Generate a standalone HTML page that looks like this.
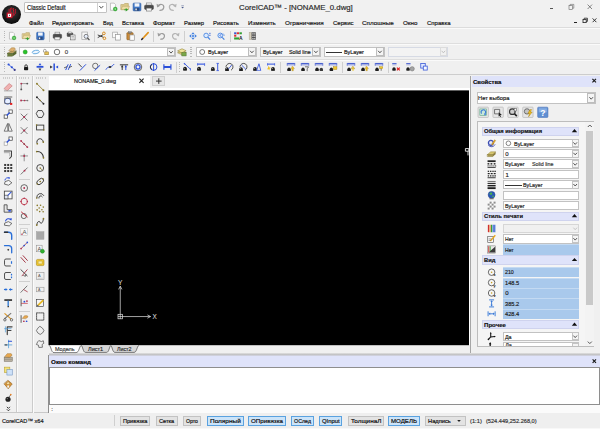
<!DOCTYPE html>
<html><head><meta charset="utf-8"><title>CorelCAD - [NONAME_0.dwg]</title>
<style>
html,body{margin:0;padding:0;}
body{width:600px;height:429px;overflow:hidden;background:#f0f0f0;font-family:"Liberation Sans", sans-serif;position:relative;}
#app{position:absolute;left:0;top:0;width:600px;height:429px;overflow:hidden;background:#f0f0f0;}
#app div{position:absolute;box-sizing:border-box;}
.t{position:absolute;white-space:pre;transform-origin:0 50%;z-index:3;-webkit-text-stroke:0.18px;}
svg{position:absolute;left:0;top:0;}
</style></head><body>
<div id="app">
<div style="left:0px;top:0px;width:600px;height:27px;background:#f1f1f1;"></div>
<div style="left:1.7px;top:4.5px;width:19.2px;height:19.2px;border-radius:50%;background:radial-gradient(circle at 50% 40%,#3c3c3c 0%,#1c1c1c 50%,#0a0a0a 78%,#5a5a5a 92%,#8a8a8a 100%);"></div>
<div style="left:24.2px;top:1.8px;width:82.4px;height:10.8px;background:#ffffff;border:0.6px solid #c2c2c2;border-radius:1px;"></div>
<span id="t0" class="t" style="left:27px;top:5px;font-size:6.3px;line-height:6.3px;color:#151515;transform:scaleX(0.9167);">Classic Default</span>
<div style="left:96.8px;top:3px;width:0.6px;height:8.8px;background:#d0d0d0;"></div>
<span id="t1" class="t" style="left:238.8px;top:4px;font-size:7.9px;line-height:7.9px;color:#2a2a2a;transform:scaleX(0.9905);">CorelCAD™ - [NONAME_0.dwg]</span>
<div style="left:549.8px;top:8.2px;width:3.4px;height:0.8px;background:#555;"></div>
<div style="left:574px;top:22px;width:3.4px;height:1px;background:#222;"></div>
<span id="t2" class="t" style="left:28.7px;top:20px;font-size:6.2px;line-height:6.2px;color:#151515;transform:scaleX(0.9725);">Файл</span>
<span id="t3" class="t" style="left:52px;top:20px;font-size:6.2px;line-height:6.2px;color:#151515;transform:scaleX(0.9778);">Редактировать</span>
<span id="t4" class="t" style="left:102.5px;top:20px;font-size:6.2px;line-height:6.2px;color:#151515;transform:scaleX(0.8926);">Вид</span>
<span id="t5" class="t" style="left:121.8px;top:20px;font-size:6.2px;line-height:6.2px;color:#151515;transform:scaleX(0.9565);">Вставка</span>
<span id="t6" class="t" style="left:152.5px;top:20px;font-size:6.2px;line-height:6.2px;color:#151515;transform:scaleX(1.0007);">Формат</span>
<span id="t7" class="t" style="left:183.8px;top:20px;font-size:6.2px;line-height:6.2px;color:#151515;transform:scaleX(0.9398);">Размер</span>
<span id="t8" class="t" style="left:213px;top:20px;font-size:6.2px;line-height:6.2px;color:#151515;transform:scaleX(0.9634);">Рисовать</span>
<span id="t9" class="t" style="left:248px;top:20px;font-size:6.2px;line-height:6.2px;color:#151515;transform:scaleX(0.9956);">Изменить</span>
<span id="t10" class="t" style="left:285px;top:20px;font-size:6.2px;line-height:6.2px;color:#151515;transform:scaleX(1.0287);">Ограничения</span>
<span id="t11" class="t" style="left:332.5px;top:20px;font-size:6.2px;line-height:6.2px;color:#151515;transform:scaleX(0.9668);">Сервис</span>
<span id="t12" class="t" style="left:362px;top:20px;font-size:6.2px;line-height:6.2px;color:#151515;transform:scaleX(1.0186);">Сплошные</span>
<span id="t13" class="t" style="left:403px;top:20px;font-size:6.2px;line-height:6.2px;color:#151515;transform:scaleX(1.0076);">Окно</span>
<span id="t14" class="t" style="left:427px;top:20px;font-size:6.2px;line-height:6.2px;color:#151515;transform:scaleX(0.9678);">Справка</span>
<div style="left:0px;top:27px;width:600px;height:0.8px;background:#dcdcdc;"></div>
<div style="left:0px;top:27.8px;width:600px;height:0.8px;background:#fafafa;"></div>
<div style="left:0px;top:43.2px;width:600px;height:0.8px;background:#dedede;"></div>
<div style="left:0px;top:44px;width:600px;height:0.7px;background:#fafafa;"></div>
<div style="left:0px;top:59.2px;width:600px;height:0.8px;background:#dedede;"></div>
<div style="left:0px;top:60px;width:600px;height:0.7px;background:#fafafa;"></div>
<div style="left:0px;top:74.2px;width:600px;height:0.8px;background:#cdcdcd;"></div>
<div style="left:3.6px;top:31px;width:1.4px;height:10px;background:repeating-linear-gradient(#b8b8b8 0 0.9px,transparent 0.9px 1.9px);"></div>
<div style="left:48.5px;top:30.5px;width:0.7px;height:11px;background:#cfcfcf;"></div>
<div style="left:93.5px;top:30.5px;width:0.7px;height:11px;background:#cfcfcf;"></div>
<div style="left:153px;top:30.5px;width:0.7px;height:11px;background:#cfcfcf;"></div>
<div style="left:184px;top:30.5px;width:0.7px;height:11px;background:#cfcfcf;"></div>
<div style="left:229.5px;top:30.5px;width:0.7px;height:11px;background:#cfcfcf;"></div>
<div style="left:3.6px;top:47px;width:1.4px;height:10px;background:repeating-linear-gradient(#b8b8b8 0 0.9px,transparent 0.9px 1.9px);"></div>
<div style="left:19px;top:46.6px;width:156.5px;height:10.2px;background:#fff;border:0.6px solid #c2c2c2;"></div>
<span id="t15" class="t" style="left:64.8px;top:49px;font-size:6.0px;line-height:6.0px;color:#444;">0</span>
<div style="left:167px;top:47.8px;width:7.7px;height:8.4px;background:#f4f4f4;border:0.5px solid #bdbdbd;"></div>
<div style="left:190.4px;top:47px;width:1.4px;height:10px;background:repeating-linear-gradient(#b8b8b8 0 0.9px,transparent 0.9px 1.9px);"></div>
<div style="left:196px;top:46.6px;width:60.5px;height:10.2px;background:#fff;border:0.6px solid #c2c2c2;"></div>
<div style="left:248.1px;top:47.4px;width:7.6px;height:8.6px;background:#f4f4f4;border:0.5px solid #bdbdbd;"></div>
<span id="t16" class="t" style="left:207.5px;top:49px;font-size:6.0px;line-height:6.0px;color:#151515;transform:scaleX(0.9084);">ByLayer</span>
<div style="left:260px;top:46.6px;width:60.5px;height:10.2px;background:#f6f6f6;border:0.6px solid #c2c2c2;"></div>
<div style="left:312.1px;top:47.4px;width:7.6px;height:8.6px;background:#f4f4f4;border:0.5px solid #bdbdbd;"></div>
<span id="t17" class="t" style="left:263px;top:49px;font-size:6.0px;line-height:6.0px;color:#151515;transform:scaleX(0.8857);">ByLayer</span>
<span id="t18" class="t" style="left:289.4px;top:49px;font-size:6.0px;line-height:6.0px;color:#151515;transform:scaleX(0.8867);">Solid line</span>
<div style="left:324px;top:46.6px;width:60.5px;height:10.2px;background:#fff;border:0.6px solid #c2c2c2;"></div>
<div style="left:376.1px;top:47.4px;width:7.6px;height:8.6px;background:#f4f4f4;border:0.5px solid #bdbdbd;"></div>
<div style="left:326.4px;top:51.6px;width:15.4px;height:0.7px;background:#333;"></div>
<span id="t19" class="t" style="left:343.8px;top:49px;font-size:6.0px;line-height:6.0px;color:#151515;transform:scaleX(0.8994);">ByLayer</span>
<div style="left:388px;top:46.6px;width:60px;height:10.2px;background:#f3f3f3;border:0.6px solid #d6dae4;"></div>
<div style="left:439.6px;top:47.4px;width:7.6px;height:8.6px;background:#f1f1f1;border:0.5px solid #dcdcdc;"></div>
<div style="left:3.6px;top:62.4px;width:1.4px;height:10px;background:repeating-linear-gradient(#b8b8b8 0 0.9px,transparent 0.9px 1.9px);"></div>
<div style="left:176.4px;top:61.8px;width:0.7px;height:11px;background:#cfcfcf;"></div>
<div style="left:178.6px;top:62.4px;width:1.4px;height:10px;background:repeating-linear-gradient(#b8b8b8 0 0.9px,transparent 0.9px 1.9px);"></div>
<div style="left:280px;top:61.8px;width:0.7px;height:11px;background:#cfcfcf;"></div>
<div style="left:341.6px;top:61.8px;width:0.7px;height:11px;background:#cfcfcf;"></div>
<div style="left:387.6px;top:61.8px;width:0.7px;height:11px;background:#cfcfcf;"></div>
<div style="left:15.6px;top:75.5px;width:0.8px;height:337px;background:#cbcbcb;"></div>
<div style="left:16.6px;top:75.5px;width:0.7px;height:337px;background:#fbfbfb;"></div>
<div style="left:32.4px;top:75.5px;width:0.8px;height:337px;background:#cbcbcb;"></div>
<div style="left:0px;top:412.2px;width:48.6px;height:0.8px;background:#c9c9c9;"></div>
<div style="left:33.2px;top:75.5px;width:0.7px;height:337px;background:#fbfbfb;"></div>
<div style="left:3px;top:77.4px;width:10px;height:1.4px;background:repeating-linear-gradient(90deg,#cdcdcd 0 0.9px,transparent 0.9px 1.9px);"></div>
<div style="left:19.4px;top:77.4px;width:10px;height:1.4px;background:repeating-linear-gradient(90deg,#cdcdcd 0 0.9px,transparent 0.9px 1.9px);"></div>
<div style="left:35.8px;top:77.4px;width:10px;height:1.4px;background:repeating-linear-gradient(90deg,#cdcdcd 0 0.9px,transparent 0.9px 1.9px);"></div>
<div style="left:18.6px;top:108.5px;width:11.4px;height:0.7px;background:#cfcfcf;"></div>
<div style="left:18.6px;top:179px;width:11.4px;height:0.7px;background:#cfcfcf;"></div>
<div style="left:18.6px;top:223.5px;width:11.4px;height:0.7px;background:#cfcfcf;"></div>
<div style="left:18.6px;top:280.5px;width:11.4px;height:0.7px;background:#cfcfcf;"></div>
<div style="left:18.6px;top:310.5px;width:11.4px;height:0.7px;background:#cfcfcf;"></div>
<div style="left:49px;top:75.6px;width:101.2px;height:15px;background:#ffffff;"></div>
<div style="left:49px;top:87.8px;width:420px;height:2.6px;background:#ffffff;"></div>
<span id="t20" class="t" style="left:74px;top:78px;font-size:6.0px;line-height:6.0px;color:#151515;transform:scaleX(0.9193);">NONAME_0.dwg</span>
<div style="left:152.4px;top:76px;width:12.8px;height:10.2px;background:#e6e6e6;border:0.6px solid #cfcfcf;"></div>
<div style="left:49px;top:91px;width:420px;height:254px;background:#000000;"></div>
<div style="left:469px;top:88px;width:1.3px;height:257.3px;background:#ffffff;"></div>
<div style="left:470.3px;top:75.5px;width:1px;height:279px;background:#a6a6a6;"></div>
<div style="left:48.6px;top:345.3px;width:421px;height:9px;background:#f0f0f0;"></div>
<span id="t21" class="t" style="left:54.6px;top:346px;font-size:6.0px;line-height:6.0px;color:#3a3a3a;transform:scaleX(0.9096);">Модель</span>
<span id="t22" class="t" style="left:88px;top:346px;font-size:6.0px;line-height:6.0px;color:#2a2a2a;transform:scaleX(0.9282);">Лист1</span>
<span id="t23" class="t" style="left:117.2px;top:346px;font-size:6.0px;line-height:6.0px;color:#2a2a2a;transform:scaleX(0.8794);">Лист2</span>
<div style="left:48.6px;top:353.2px;width:552px;height:2.6px;background:linear-gradient(#e4e4e4,#c2c2c2 45%,#d4d6e6);"></div>
<div style="left:48.6px;top:355.8px;width:551.4px;height:11.4px;background:#dfe3fa;"></div>
<span id="t24" class="t" style="left:50.6px;top:359px;font-size:6.1px;line-height:6.1px;color:#0a0a0a;font-weight:bold;transform:scaleX(1.0289);">Окно команд</span>
<div style="left:48.6px;top:367.2px;width:551.4px;height:37.6px;background:#ffffff;border:0.8px solid #8e8e8e;"></div>
<div style="left:48.6px;top:404.8px;width:551.4px;height:8.2px;background:#fbfbfb;"></div>
<span id="t25" class="t" style="left:51.2px;top:406px;font-size:6.0px;line-height:6.0px;color:#444;">:</span>
<div style="left:48.2px;top:355px;width:0.8px;height:58px;background:#8e8e8e;"></div>
<div style="left:0px;top:413px;width:600px;height:16px;background:#efefef;"></div>
<div style="left:0px;top:427.6px;width:600px;height:1.4px;background:#f8f8f8;"></div>
<span id="t26" class="t" style="left:1.8px;top:418px;font-size:6.2px;line-height:6.2px;color:#151515;transform:scaleX(0.9096);">CorelCAD™ x64</span>
<div style="left:114.4px;top:415.4px;width:0.7px;height:10.6px;background:#cfcfcf;"></div>
<div style="left:120px;top:416.2px;width:30.400000000000006px;height:9.4px;background:#e3e3e3;border:1px solid #c2c2c2;"></div>
<span id="t27" class="t" style="left:123.0px;top:418px;font-size:6.0px;line-height:6.0px;color:#0c0c0c;transform:scaleX(0.9306);">Привязка</span>
<div style="left:156.4px;top:416.2px;width:21.19999999999999px;height:9.4px;background:#e3e3e3;border:1px solid #c2c2c2;"></div>
<span id="t28" class="t" style="left:159.4px;top:418px;font-size:6.0px;line-height:6.0px;color:#0c0c0c;transform:scaleX(0.9318);">Сетка</span>
<div style="left:182.6px;top:416.2px;width:18.0px;height:9.4px;background:#e3e3e3;border:1px solid #c2c2c2;"></div>
<span id="t29" class="t" style="left:185.6px;top:418px;font-size:6.0px;line-height:6.0px;color:#0c0c0c;transform:scaleX(0.8639);">Орто</span>
<div style="left:207px;top:416.2px;width:36.80000000000001px;height:9.4px;background:#cce4f9;border:1px solid #5aa2e0;"></div>
<span id="t30" class="t" style="left:210.0px;top:418px;font-size:6.0px;line-height:6.0px;color:#0c0c0c;transform:scaleX(1.0772);">Полярный</span>
<div style="left:248.3px;top:416.2px;width:38.0px;height:9.4px;background:#cce4f9;border:1px solid #5aa2e0;"></div>
<span id="t31" class="t" style="left:251.3px;top:418px;font-size:6.0px;line-height:6.0px;color:#0c0c0c;transform:scaleX(1.0359);">ОПривязка</span>
<div style="left:290.8px;top:416.2px;width:23.0px;height:9.4px;background:#cce4f9;border:1px solid #5aa2e0;"></div>
<span id="t32" class="t" style="left:293.8px;top:418px;font-size:6.0px;line-height:6.0px;color:#0c0c0c;transform:scaleX(0.8846);">ОСлед</span>
<div style="left:318.8px;top:416.2px;width:23.69999999999999px;height:9.4px;background:#cce4f9;border:1px solid #5aa2e0;"></div>
<span id="t33" class="t" style="left:321.8px;top:418px;font-size:6.0px;line-height:6.0px;color:#0c0c0c;transform:scaleX(0.9825);">QInput</span>
<div style="left:347.5px;top:416.2px;width:36.30000000000001px;height:9.4px;background:#e3e3e3;border:1px solid #c2c2c2;"></div>
<span id="t34" class="t" style="left:350.5px;top:418px;font-size:6.0px;line-height:6.0px;color:#0c0c0c;transform:scaleX(1.0528);">ТолщинаЛ</span>
<div style="left:387.6px;top:416.2px;width:32.0px;height:9.4px;background:#cce4f9;border:1px solid #5aa2e0;"></div>
<span id="t35" class="t" style="left:390.6px;top:418px;font-size:6.0px;line-height:6.0px;color:#0c0c0c;transform:scaleX(1.0202);">МОДЕЛЬ</span>
<div style="left:424.5px;top:416.2px;width:41.8px;height:9.4px;background:#e3e3e3;border:1px solid #c2c2c2;"></div>
<span id="t36" class="t" style="left:427.6px;top:418px;font-size:6.0px;line-height:6.0px;color:#0c0c0c;transform:scaleX(0.9537);">Надпись</span>
<span id="t37" class="t" style="left:470.2px;top:418px;font-size:6.0px;line-height:6.0px;color:#333;transform:scaleX(0.9559);">(1:1)</span>
<span id="t38" class="t" style="left:486.3px;top:418px;font-size:6.0px;line-height:6.0px;color:#333;transform:scaleX(0.9362);">(524.449,252.268,0)</span>
<div style="left:471.6px;top:75.6px;width:128.4px;height:11px;background:#dfe3fa;"></div>
<span id="t39" class="t" style="left:473px;top:79px;font-size:6.1px;line-height:6.1px;color:#0a0a0a;font-weight:bold;transform:scaleX(0.9804);">Свойства</span>
<div style="left:476.6px;top:92.4px;width:119.2px;height:11.4px;background:#fff;border:0.6px solid #c2c2c2;"></div>
<div style="left:587.4000000000001px;top:93.2px;width:7.6px;height:9.8px;background:#f4f4f4;border:0.5px solid #bdbdbd;"></div>
<span id="t40" class="t" style="left:478.2px;top:95px;font-size:6.2px;line-height:6.2px;color:#151515;transform:scaleX(0.9274);">Нет выбора</span>
<div style="left:476.8px;top:121.2px;width:117.4px;height:226.2px;background:#f5f5f5;border:0.8px solid #bdbdbd;"></div>
<div style="left:585.4px;top:122.2px;width:8.2px;height:223.6px;background:#f3f3f3;"></div>
<div style="left:585.6px;top:130.8px;width:7.2px;height:173.8px;background:#c9c9c9;"></div>
<div style="left:482.4px;top:126.6px;width:97px;height:9.2px;background:#dfe3fa;border:0.5px solid #cfd3ee;"></div>
<span id="t41" class="t" style="left:484.4px;top:128px;font-size:6.0px;line-height:6.0px;color:#111;font-weight:bold;transform:scaleX(0.9614);">Общая информация</span>
<div style="left:502.8px;top:138.6px;width:76.6px;height:9.3px;background:#fff;border:0.6px solid #c2c2c2;"></div>
<div style="left:571.6px;top:139.2px;width:7.2px;height:8.100000000000001px;background:#f4f4f4;border:0.5px solid #c4c4c4;"></div>
<span id="t42" class="t" style="left:514.2px;top:141px;font-size:6.0px;line-height:6.0px;color:#1c1c1c;transform:scaleX(0.9084);">ByLayer</span>
<div style="left:502.8px;top:149.0px;width:76.6px;height:9.3px;background:#fff;border:0.6px solid #c2c2c2;"></div>
<div style="left:571.6px;top:149.6px;width:7.2px;height:8.100000000000001px;background:#f4f4f4;border:0.5px solid #c4c4c4;"></div>
<span id="t43" class="t" style="left:505.2px;top:151px;font-size:6.0px;line-height:6.0px;color:#1c1c1c;">0</span>
<div style="left:502.8px;top:159.4px;width:76.6px;height:9.3px;background:#fff;border:0.6px solid #c2c2c2;"></div>
<div style="left:571.6px;top:160.0px;width:7.2px;height:8.100000000000001px;background:#f4f4f4;border:0.5px solid #c4c4c4;"></div>
<span id="t44" class="t" style="left:505.2px;top:161px;font-size:6.0px;line-height:6.0px;color:#1c1c1c;transform:scaleX(0.8812);">ByLayer</span>
<span id="t45" class="t" style="left:532px;top:161px;font-size:6.0px;line-height:6.0px;color:#333;transform:scaleX(0.8785);">Solid line</span>
<div style="left:502.8px;top:169.8px;width:76.6px;height:9.3px;background:#fff;border:0.6px solid #c2c2c2;"></div>
<span id="t46" class="t" style="left:505.4px;top:172px;font-size:6.0px;line-height:6.0px;color:#1c1c1c;">1</span>
<div style="left:502.8px;top:180.2px;width:76.6px;height:9.3px;background:#fff;border:0.6px solid #c2c2c2;"></div>
<div style="left:571.6px;top:180.79999999999998px;width:7.2px;height:8.100000000000001px;background:#f4f4f4;border:0.5px solid #c4c4c4;"></div>
<span id="t47" class="t" style="left:523.2px;top:182px;font-size:6.0px;line-height:6.0px;color:#1c1c1c;transform:scaleX(0.8812);">ByLayer</span>
<div style="left:505.2px;top:184.7px;width:16.4px;height:0.7px;background:#333;"></div>
<div style="left:502.8px;top:190.6px;width:76.6px;height:9.3px;background:#fff;border:0.6px solid #c2c2c2;"></div>
<div style="left:502.8px;top:201.0px;width:76.6px;height:9.3px;background:#fff;border:0.6px solid #c2c2c2;"></div>
<span id="t48" class="t" style="left:505.2px;top:203px;font-size:6.0px;line-height:6.0px;color:#1c1c1c;transform:scaleX(0.8812);">ByLayer</span>
<div style="left:482.4px;top:211.6px;width:97px;height:9.2px;background:#dfe3fa;border:0.5px solid #cfd3ee;"></div>
<span id="t49" class="t" style="left:484.4px;top:213px;font-size:6.0px;line-height:6.0px;color:#111;font-weight:bold;transform:scaleX(0.9656);">Стиль печати</span>
<div style="left:502.8px;top:223.9px;width:76.6px;height:9.3px;background:#f0f0f0;border:0.6px solid #d6d6d6;"></div>
<div style="left:502.8px;top:234.3px;width:76.6px;height:9.3px;background:#fff;border:0.6px solid #c2c2c2;"></div>
<div style="left:571.6px;top:234.9px;width:7.2px;height:8.100000000000001px;background:#f4f4f4;border:0.5px solid #c4c4c4;"></div>
<span id="t50" class="t" style="left:505.2px;top:236px;font-size:6.0px;line-height:6.0px;color:#1c1c1c;transform:scaleX(0.8416);">Нет</span>
<div style="left:502.8px;top:244.3px;width:76.6px;height:10.4px;background:#a9c9ec;border-top:0.6px solid #c4daf2;"></div>
<span id="t51" class="t" style="left:505.2px;top:247px;font-size:6.0px;line-height:6.0px;color:#1c1c1c;transform:scaleX(0.8416);">Нет</span>
<div style="left:482.4px;top:255.4px;width:97px;height:9.2px;background:#dfe3fa;border:0.5px solid #cfd3ee;"></div>
<span id="t52" class="t" style="left:484.4px;top:257px;font-size:6.0px;line-height:6.0px;color:#111;font-weight:bold;transform:scaleX(0.9625);">Вид</span>
<div style="left:502.8px;top:267.1px;width:76.6px;height:10.4px;background:#a9c9ec;border-top:0.6px solid #c4daf2;"></div>
<span id="t53" class="t" style="left:505.2px;top:269px;font-size:6.0px;line-height:6.0px;color:#1c1c1c;transform:scaleX(0.8786);">210</span>
<div style="left:502.8px;top:277.5px;width:76.6px;height:10.4px;background:#a9c9ec;border-top:0.6px solid #c4daf2;"></div>
<span id="t54" class="t" style="left:505.2px;top:280px;font-size:6.0px;line-height:6.0px;color:#1c1c1c;transform:scaleX(0.9457);">148.5</span>
<div style="left:502.8px;top:287.9px;width:76.6px;height:10.4px;background:#a9c9ec;border-top:0.6px solid #c4daf2;"></div>
<span id="t55" class="t" style="left:505.2px;top:290px;font-size:6.0px;line-height:6.0px;color:#1c1c1c;">0</span>
<div style="left:502.8px;top:298.3px;width:76.6px;height:10.4px;background:#a9c9ec;border-top:0.6px solid #c4daf2;"></div>
<span id="t56" class="t" style="left:505.2px;top:301px;font-size:6.0px;line-height:6.0px;color:#1c1c1c;transform:scaleX(0.9457);">385.2</span>
<div style="left:502.8px;top:308.7px;width:76.6px;height:10.4px;background:#a9c9ec;border-top:0.6px solid #c4daf2;"></div>
<span id="t57" class="t" style="left:505.2px;top:311px;font-size:6.0px;line-height:6.0px;color:#1c1c1c;transform:scaleX(0.9457);">428.4</span>
<div style="left:482.4px;top:320.0px;width:97px;height:9.2px;background:#dfe3fa;border:0.5px solid #cfd3ee;"></div>
<span id="t58" class="t" style="left:484.4px;top:322px;font-size:6.0px;line-height:6.0px;color:#111;font-weight:bold;transform:scaleX(1.0159);">Прочее</span>
<div style="left:502.8px;top:331.8px;width:76.6px;height:9.3px;background:#fff;border:0.6px solid #c2c2c2;"></div>
<div style="left:571.6px;top:332.40000000000003px;width:7.2px;height:8.100000000000001px;background:#f4f4f4;border:0.5px solid #c4c4c4;"></div>
<span id="t59" class="t" style="left:505.2px;top:334px;font-size:6.0px;line-height:6.0px;color:#1c1c1c;transform:scaleX(0.8911);">Да</span>
<div style="left:502.8px;top:342.2px;width:76.6px;height:3.8px;background:#fff;border:0.6px solid #c2c2c2;border-bottom:none;"></div>
<div style="left:571.6px;top:342.8px;width:7.2px;height:3.2px;background:#f4f4f4;border:0.5px solid #c4c4c4;border-bottom:none;"></div>
<div style="left:486px;top:341.6px;width:92px;height:4.4px;overflow:hidden;"><span class="t" style="left:19.2px;top:1.4px;font-size:5.4px;line-height:5.4px;color:#333;">Да</span></div>
<svg width="600" height="429" viewBox="0 0 600 429">
<g transform="translate(11.3,14.1)"><rect x="-4.7" y="-1.6" width="5.8" height="5.6" fill="#c8182c"/><rect x="-3.4" y="-0.3" width="3.2" height="3.1" fill="#fafafa"/><rect x="-2.3" y="0.7" width="1" height="1" fill="#333"/><path d="M-2.2,-1.6 V-5.2 M-0.6,-1.6 V-6 C0.4,-6.6 1,-5.6 0.8,-4.4" fill="none" stroke="#c8182c" stroke-width="1"/><path d="M2.2,-6 C1.6,-3.6 3,-2.4 2.4,0 C2,1.4 1.4,2 1.4,2.6 M4.2,-5 C3.6,-3 4.8,-2 4,-0.6 C3.4,0.6 2.6,0.4 2.6,1.6" fill="none" stroke="#c8182c" stroke-width="1"/></g>
<path d="M99.3,6 L101.3,8.2 L103.3,6" fill="none" stroke="#444" stroke-width="0.9"/>
<g transform="translate(113.4,7.0) scale(0.92)"><path d="M-2.8,-4.2 H0.8 L2.4,-2.6 V3.6 H-2.8 Z" fill="#fdfdfd" stroke="#a8a8a8" stroke-width="0.7" stroke-linejoin="round" stroke-linecap="round" /><circle cx="2" cy="2.2" r="2.1" fill="#3db83d" stroke="#2a962a" stroke-width="0.5"/><circle cx="2" cy="2.2" r="0.8" fill="#c8f0c8" stroke="none" stroke-width="1"/></g>
<g transform="translate(125.2,7.0) scale(0.92)"><path d="M-4.4,-2.6 H-1.6 L-0.6,-3.8 H3.4 V2.6 H-4.4 Z" fill="#dcc98a" stroke="#b8a466" stroke-width="0.7" stroke-linejoin="round" stroke-linecap="round" /><path d="M-4.4,2.6 L-3,-0.8 H4.6 L3.4,2.6 Z" fill="#ecdca4" stroke="#b8a466" stroke-width="0.6" stroke-linejoin="round" stroke-linecap="round" /><path d="M0.6,1 L3.2,3 L0.6,5 Z" fill="#30a030" stroke="none" stroke-width="1" stroke-linejoin="round" stroke-linecap="round" /><line x1="-1" y1="3" x2="1" y2="3" stroke="#30a030" stroke-width="1" stroke-linecap="butt"/></g>
<g transform="translate(137,7.0) scale(0.92)"><rect x="-4.2" y="-4.2" width="8.4" height="8.4" fill="#3f78c8" stroke="#2a5aa4" stroke-width="0.7" rx="0.8"/><rect x="-2.6" y="-4" width="5.2" height="3.6" fill="#f2f5fb" stroke="none" stroke-width="1" rx="0"/><rect x="-2.6" y="1" width="5.2" height="3.2" fill="#2a4a80" stroke="none" stroke-width="1" rx="0"/><rect x="-1.8" y="1.6" width="1.6" height="2" fill="#e8e8e8" stroke="none" stroke-width="1" rx="0"/></g>
<g transform="translate(149,7.0) scale(0.92)"><rect x="-2.7" y="-4.4" width="5.4" height="3" fill="#f2f2f2" stroke="#777" stroke-width="0.6" rx="0"/><rect x="-4.8" y="-2" width="9.6" height="4.6" fill="#4a4a4a" stroke="#333" stroke-width="0.5" rx="1"/><rect x="-2.9" y="1.2" width="5.8" height="3.2" fill="#f6f6f6" stroke="#666" stroke-width="0.6" rx="0"/></g>
<g transform="translate(160.8,7.0) scale(0.92)"><path d="M-3.2,-0.8 C-1,-4.2 3.8,-3 3.2,0.6 C2.8,2.6 1,3.6 -1,3.6" fill="none" stroke="#9c9c9c" stroke-width="1.3" stroke-linejoin="round" stroke-linecap="round" /><path d="M-4.6,-3.6 L-4,0.6 L-0.6,-1.4 Z" fill="#9c9c9c" stroke="none" stroke-width="1" stroke-linejoin="round" stroke-linecap="round" /></g>
<g transform="translate(172.4,7.0) scale(0.92)"><path d="M3.2,-0.8 C1,-4.2 -3.8,-3 -3.2,0.6 C-2.8,2.6 -1,3.6 1,3.6" fill="none" stroke="#b4b4b4" stroke-width="1.3" stroke-linejoin="round" stroke-linecap="round" /><path d="M4.6,-3.6 L4,0.6 L0.6,-1.4 Z" fill="#b4b4b4" stroke="none" stroke-width="1" stroke-linejoin="round" stroke-linecap="round" /></g>
<g transform="translate(182.6,7.4) scale(0.8)"><path d="M-1.6,-0.6 H1.6 L0,1.4 Z" fill="#4a5a8a" stroke="none" stroke-width="1" stroke-linejoin="round" stroke-linecap="round" /><line x1="-1.6" y1="-2" x2="1.6" y2="-2" stroke="#4a5a8a" stroke-width="0.7" stroke-linecap="butt"/></g>
<g stroke="#666" stroke-width="0.6" fill="none"><rect x="569" y="5.6" width="3.6" height="3.8"/><path d="M570.2,5.6 V4.4 H573.8 V8.2 H572.6"/></g>
<path d="M587.6,4.6 L592,9 M592,4.6 L587.6,9" stroke="#555" stroke-width="0.7" fill="none"/>
<g stroke="#222" stroke-width="0.8" fill="none"><rect x="583" y="19.4" width="3.2" height="3.2"/><path d="M584.2,19.4 V18.2 H587.4 V21.4 H586.2"/></g>
<path d="M592.6,18.4 L596.4,22.2 M596.4,18.4 L592.6,22.2" stroke="#222" stroke-width="0.9" fill="none"/>
<g transform="translate(12.3,36) scale(0.88)"><path d="M-2.8,-4.2 H0.8 L2.4,-2.6 V3.6 H-2.8 Z" fill="#fdfdfd" stroke="#a8a8a8" stroke-width="0.7" stroke-linejoin="round" stroke-linecap="round" /><circle cx="2" cy="2.2" r="2.1" fill="#3db83d" stroke="#2a962a" stroke-width="0.5"/><circle cx="2" cy="2.2" r="0.8" fill="#c8f0c8" stroke="none" stroke-width="1"/></g>
<g transform="translate(26.4,36) scale(0.88)"><path d="M-4.4,-2.6 H-1.6 L-0.6,-3.8 H3.4 V2.6 H-4.4 Z" fill="#dcc98a" stroke="#b8a466" stroke-width="0.7" stroke-linejoin="round" stroke-linecap="round" /><path d="M-4.4,2.6 L-3,-0.8 H4.6 L3.4,2.6 Z" fill="#ecdca4" stroke="#b8a466" stroke-width="0.6" stroke-linejoin="round" stroke-linecap="round" /><path d="M0.6,1 L3.2,3 L0.6,5 Z" fill="#30a030" stroke="none" stroke-width="1" stroke-linejoin="round" stroke-linecap="round" /><line x1="-1" y1="3" x2="1" y2="3" stroke="#30a030" stroke-width="1" stroke-linecap="butt"/></g>
<g transform="translate(40.4,36) scale(0.88)"><rect x="-4.2" y="-4.2" width="8.4" height="8.4" fill="#3f78c8" stroke="#2a5aa4" stroke-width="0.7" rx="0.8"/><rect x="-2.6" y="-4" width="5.2" height="3.6" fill="#f2f5fb" stroke="none" stroke-width="1" rx="0"/><rect x="-2.6" y="1" width="5.2" height="3.2" fill="#2a4a80" stroke="none" stroke-width="1" rx="0"/><rect x="-1.8" y="1.6" width="1.6" height="2" fill="#e8e8e8" stroke="none" stroke-width="1" rx="0"/></g>
<g transform="translate(57.4,36) scale(0.88)"><rect x="-2.7" y="-4.4" width="5.4" height="3" fill="#f2f2f2" stroke="#777" stroke-width="0.6" rx="0"/><rect x="-4.8" y="-2" width="9.6" height="4.6" fill="#4a4a4a" stroke="#333" stroke-width="0.5" rx="1"/><rect x="-2.9" y="1.2" width="5.8" height="3.2" fill="#f6f6f6" stroke="#666" stroke-width="0.6" rx="0"/></g>
<g transform="translate(71.2,36) scale(0.88)"><rect x="-4.6" y="-3.6" width="6.4" height="4.2" fill="#4a4a4a" stroke="#333" stroke-width="0.5" rx="0.8"/><rect x="-3.4" y="-4.6" width="4" height="1.6" fill="#eee" stroke="#777" stroke-width="0.5" rx="0"/><rect x="-1" y="-1.2" width="5.4" height="5.6" fill="#f4f4f4" stroke="#6a6a6a" stroke-width="0.7" rx="0"/><line x1="0.2" y1="0.6" x2="3.2" y2="0.6" stroke="#888" stroke-width="0.6" stroke-linecap="butt"/><line x1="0.2" y1="2.2" x2="3.2" y2="2.2" stroke="#888" stroke-width="0.6" stroke-linecap="butt"/></g>
<g transform="translate(85.4,36) scale(0.88)"><rect x="-4" y="-4.5" width="6.6" height="8.6" fill="#f7f7f7" stroke="#9a9a9a" stroke-width="0.7" rx="0"/><circle cx="0.8" cy="0.4" r="2.3" fill="#e6eefc" stroke="#555" stroke-width="0.8"/><line x1="2.4" y1="2.2" x2="4.6" y2="4.6" stroke="#444" stroke-width="1.3" stroke-linecap="butt"/></g>
<g transform="translate(101.6,36) scale(0.88)"><line x1="-4.4" y1="-1.2" x2="2.4" y2="1.6" stroke="#3a3a3a" stroke-width="1.1" stroke-linecap="butt"/><line x1="-4.4" y1="1.8" x2="1.6" y2="-1.4" stroke="#3a3a3a" stroke-width="1.1" stroke-linecap="butt"/><circle cx="2.6" cy="-3" r="1.5" fill="none" stroke="#d88a1a" stroke-width="1.1"/><circle cx="3.2" cy="2.6" r="1.5" fill="none" stroke="#d88a1a" stroke-width="1.1"/></g>
<g transform="translate(116.4,36) scale(0.88)"><rect x="-4.2" y="-4.4" width="5.4" height="6.4" fill="#fafafa" stroke="#999" stroke-width="0.7" rx="0"/><rect x="-1" y="-1.6" width="5.4" height="6.2" fill="#fdfdfd" stroke="#8a8a8a" stroke-width="0.7" rx="0"/></g>
<g transform="translate(130.4,36) scale(0.88)"><rect x="-4" y="-3.8" width="7" height="8" fill="#c98a3a" stroke="#8a5a1a" stroke-width="0.7" rx="0.6"/><rect x="-2" y="-4.8" width="3" height="1.8" fill="#8a8a8a" stroke="#555" stroke-width="0.4" rx="0"/><rect x="-0.6" y="-1.2" width="5" height="6" fill="#fbfbfb" stroke="#8a8a8a" stroke-width="0.7" rx="0"/></g>
<g transform="translate(145,36) scale(0.88)"><line x1="-2.6" y1="2.8" x2="3.6" y2="-3.8" stroke="#e09018" stroke-width="1.8" stroke-linecap="round"/><line x1="-3.8" y1="4" x2="-2.8" y2="3" stroke="#2a2a3a" stroke-width="1.7" stroke-linecap="round"/></g>
<g transform="translate(161.6,36) scale(0.88)"><path d="M-3.2,-0.8 C-1,-4.2 3.8,-3 3.2,0.6 C2.8,2.6 1,3.6 -1,3.6" fill="none" stroke="#9c9c9c" stroke-width="1.3" stroke-linejoin="round" stroke-linecap="round" /><path d="M-4.6,-3.6 L-4,0.6 L-0.6,-1.4 Z" fill="#9c9c9c" stroke="none" stroke-width="1" stroke-linejoin="round" stroke-linecap="round" /></g>
<g transform="translate(175.4,36) scale(0.88)"><path d="M3.2,-0.8 C1,-4.2 -3.8,-3 -3.2,0.6 C-2.8,2.6 -1,3.6 1,3.6" fill="none" stroke="#b4b4b4" stroke-width="1.3" stroke-linejoin="round" stroke-linecap="round" /><path d="M4.6,-3.6 L4,0.6 L0.6,-1.4 Z" fill="#b4b4b4" stroke="none" stroke-width="1" stroke-linejoin="round" stroke-linecap="round" /></g>
<g transform="translate(193,36) scale(0.88)"><path d="M0,-4.4 L1.9,-2 H-1.9 Z M0,4.4 L1.9,2 H-1.9 Z M-4.4,0 L-2,1.9 V-1.9 Z M4.4,0 L2,1.9 V-1.9 Z" fill="#3f7fe0" stroke="none" stroke-width="1" stroke-linejoin="round" stroke-linecap="round" /><rect x="-1" y="-1" width="2" height="2" fill="#3f7fe0" stroke="none" stroke-width="1" rx="0"/></g>
<g transform="translate(207,36) scale(0.88)"><circle cx="-1" cy="-0.6" r="2.6" fill="#dcebff" stroke="#4a86e0" stroke-width="1"/><line x1="1" y1="1.4" x2="3.6" y2="4.2" stroke="#4a86e0" stroke-width="1.4" stroke-linecap="butt"/><rect x="2.6" y="-3.6" width="1.4" height="1.2" fill="#3a6ad8" stroke="none" stroke-width="1" rx="0"/><rect x="2.6" y="-1.4" width="1.4" height="1.2" fill="#3a6ad8" stroke="none" stroke-width="1" rx="0"/></g>
<g transform="translate(221,36) scale(0.88)"><circle cx="-0.8" cy="-0.6" r="2.7" fill="#dcebff" stroke="#4a86e0" stroke-width="1"/><line x1="1.4" y1="1.6" x2="3.8" y2="4.2" stroke="#4a86e0" stroke-width="1.4" stroke-linecap="butt"/><path d="M0.2,-1.8 L-1.6,-0.6 L0.2,0.6" fill="none" stroke="#3a6ad8" stroke-width="0.8" stroke-linejoin="round" stroke-linecap="round" /><path d="M2.6,-2.6 A2.6,2.6 0 0 1 3.6,-0.4" fill="none" stroke="#4a86e0" stroke-width="0.8" stroke-linejoin="round" stroke-linecap="round" /></g>
<g transform="translate(238,36) scale(0.88)"><rect x="-4.4" y="-4.2" width="2.6" height="2.2" fill="#3a5ad8" stroke="none" stroke-width="1" rx="0"/><rect x="-1.4" y="-4.2" width="2.6" height="2.2" fill="#e03030" stroke="none" stroke-width="1" rx="0"/><rect x="1.6" y="-4.2" width="2.8" height="2.2" fill="#30a030" stroke="none" stroke-width="1" rx="0"/><rect x="-4.4" y="-1.4" width="2.6" height="2.2" fill="#e03030" stroke="none" stroke-width="1" rx="0"/><rect x="-1.4" y="-1.4" width="2.6" height="2.2" fill="#f4f4f4" stroke="#ccc" stroke-width="0.3" rx="0"/><rect x="-4.4" y="1.6" width="5.6" height="2.4" fill="#30a030" stroke="none" stroke-width="1" rx="0"/><text x="3.1" y="4.7" text-anchor="middle" font-family="Liberation Sans, sans-serif" font-size="5.6" font-weight="bold" fill="#1a1a1a">A</text></g>
<g transform="translate(252.5,36) scale(0.88)"><rect x="-3.8" y="-4.2" width="2.8" height="8.4" fill="#d8d0bc" stroke="#a8a08c" stroke-width="0.5" rx="0"/><rect x="-1" y="-4.2" width="4.8" height="8.4" fill="#4a4a4a" stroke="none" stroke-width="1" rx="0"/><rect x="-0.2" y="-3.2" width="1.4" height="1.6" fill="#d8d8d8" stroke="none" stroke-width="1" rx="0"/><rect x="2" y="-3.2" width="1.2" height="1.6" fill="#d8d8d8" stroke="none" stroke-width="1" rx="0"/><rect x="-0.2" y="-0.4" width="1.4" height="1.6" fill="#d8d8d8" stroke="none" stroke-width="1" rx="0"/><rect x="2" y="-0.4" width="1.2" height="1.6" fill="#d8d8d8" stroke="none" stroke-width="1" rx="0"/><rect x="-0.2" y="2.2" width="1.4" height="1.4" fill="#d8d8d8" stroke="none" stroke-width="1" rx="0"/><rect x="2" y="2.2" width="1.2" height="1.4" fill="#d8d8d8" stroke="none" stroke-width="1" rx="0"/></g>
<g transform="translate(12,52) scale(0.95)"><path d="M-4.6,1.2 L-0.6,-1.2 H4.6 L0.8,1.2 Z" fill="#c8a86a" stroke="#7a6a3a" stroke-width="0.5" stroke-linejoin="round" stroke-linecap="round" /><rect x="-4.6" y="1.2" width="5.4" height="3.2" fill="#6a7a3a" stroke="#4a5a2a" stroke-width="0.4" rx="0"/><path d="M0.8,1.2 L4.6,-1.2 V1.8 L0.8,4.4 Z" fill="#56642c" stroke="none" stroke-width="1" stroke-linejoin="round" stroke-linecap="round" /><path d="M-3.2,-1.6 L-0.6,-4.4 H2.6 L3.6,-2.8 L0.8,-0.8 Z" fill="#e0b070" stroke="#9a7a3a" stroke-width="0.5" stroke-linejoin="round" stroke-linecap="round" /></g>
<g transform="translate(25.2,52) scale(0.85)"><circle cx="0" cy="0" r="2.4" fill="#28c428" stroke="#158a15" stroke-width="0.6"/></g>
<g transform="translate(35.8,52) scale(0.85)"><ellipse cx="0" cy="0" rx="4.2" ry="2" fill="#eef6ff" stroke="#4a9ad8" stroke-width="0.9" transform="rotate(-10 0 0)"/></g>
<g transform="translate(46.4,52.2) scale(0.8)"><rect x="-2" y="-0.4" width="4.6" height="3.6" fill="#e8c45a" stroke="#8a6a1a" stroke-width="0.6" rx="0"/><path d="M-3.6,-0.4 V-2 A1.6,1.6 0 0 1 -0.4,-2 V-0.4" fill="none" stroke="#777" stroke-width="0.8" stroke-linejoin="round" stroke-linecap="round" /></g>
<g transform="translate(57,52) scale(0.95)"><circle cx="0" cy="0" r="2.9" fill="#fdfdfd" stroke="#444" stroke-width="0.8"/></g>
<path d="M169.2,51.1 L171,53.1 L172.8,51.1" fill="none" stroke="#444" stroke-width="0.9"/>
<g transform="translate(182,52) scale(0.9)"><path d="M-4.6,0.6 L0,-1.6 L4.6,0.6 L0,2.8 Z" fill="#e4d27a" stroke="#8a7a2a" stroke-width="0.6" stroke-linejoin="round" stroke-linecap="round" /><path d="M-4.6,-1.4 L0,-3.6 L4.6,-1.4 L0,0.8 Z" fill="#efe29a" stroke="#8a7a2a" stroke-width="0.6" stroke-linejoin="round" stroke-linecap="round" /><rect x="-0.2" y="0.6" width="4.8" height="3.8" fill="#7aa84a" stroke="#4a6a2a" stroke-width="0.5" rx="0"/></g>
<path d="M250.1,50.800000000000004 L251.9,52.800000000000004 L253.70000000000002,50.800000000000004" fill="none" stroke="#444" stroke-width="0.9"/>
<g transform="translate(202.2,52) scale(0.85)"><circle cx="0" cy="0" r="2.9" fill="#fdfdfd" stroke="#444" stroke-width="0.8"/></g>
<path d="M314.09999999999997,50.800000000000004 L315.9,52.800000000000004 L317.7,50.800000000000004" fill="none" stroke="#444" stroke-width="0.9"/>
<path d="M378.09999999999997,50.800000000000004 L379.9,52.800000000000004 L381.7,50.800000000000004" fill="none" stroke="#444" stroke-width="0.9"/>
<path d="M441.59999999999997,50.800000000000004 L443.4,52.800000000000004 L445.2,50.800000000000004" fill="none" stroke="#bbb" stroke-width="0.9"/>
<g transform="translate(12,67) scale(0.9)"><line x1="-3.8" y1="-2.8" x2="3" y2="3.2" stroke="#2a4fd8" stroke-width="0.9" stroke-linecap="butt"/><circle cx="-3.8" cy="-2.8" r="1.2" fill="#2a4fd8" stroke="none" stroke-width="1"/><circle cx="-0.2" cy="0.3" r="1.2" fill="#2a4fd8" stroke="none" stroke-width="1"/><circle cx="3" cy="3.2" r="1.2" fill="#3a3a8a" stroke="none" stroke-width="1"/></g>
<g transform="translate(26,67) scale(0.9)"><rect x="-2.2" y="0" width="4.6" height="3.6" fill="#1a1a1a" stroke="none" stroke-width="0" rx="0.8"/><path d="M-1.2,0 V-1.2 A1.3,1.3 0 0 1 1.4,-1.2 V0" fill="none" stroke="#1a1a1a" stroke-width="0.9" stroke-linejoin="round" stroke-linecap="round" /></g>
<g transform="translate(40,67) scale(0.9)"><line x1="-3.8" y1="-0.2" x2="3.8" y2="-0.2" stroke="#2a4fd8" stroke-width="2" stroke-linecap="butt"/><path d="M0,-4.4 L1.6,-2 H-1.6 Z" fill="#2a4fd8" stroke="none" stroke-width="1" stroke-linejoin="round" stroke-linecap="round" /><path d="M0,4.4 L1.6,1.8 H-1.6 Z" fill="#444" stroke="none" stroke-width="1" stroke-linejoin="round" stroke-linecap="round" /></g>
<g transform="translate(54,67) scale(0.9)"><line x1="0.2" y1="-3.8" x2="0.2" y2="4" stroke="#2a4fd8" stroke-width="1.7" stroke-linecap="butt"/><path d="M-4.4,-1.6 L-1.4,0.1 L-4.4,1.8 Z" fill="#333" stroke="none" stroke-width="1" stroke-linejoin="round" stroke-linecap="round" /><path d="M4.6,-1.6 L1.8,0.1 L4.6,1.8 Z" fill="#2a4fd8" stroke="none" stroke-width="1" stroke-linejoin="round" stroke-linecap="round" /></g>
<g transform="translate(68,67) scale(0.9)"><line x1="-2.6" y1="3.4" x2="0.2" y2="-3" stroke="#2a4fd8" stroke-width="1.1" stroke-linecap="butt"/><line x1="0.2" y1="3.2" x2="3" y2="-3.2" stroke="#2a4fd8" stroke-width="1.1" stroke-linecap="butt"/><line x1="-4.4" y1="1" x2="-1" y2="-0.4" stroke="#444" stroke-width="0.9" stroke-linecap="butt"/><line x1="1" y1="0.6" x2="4.4" y2="-0.8" stroke="#444" stroke-width="0.9" stroke-linecap="butt"/></g>
<g transform="translate(82,67) scale(0.9)"><line x1="-4" y1="-3.8" x2="-0.2" y2="0.2" stroke="#333" stroke-width="1" stroke-linecap="butt"/><line x1="-2.4" y1="4" x2="4.4" y2="-3" stroke="#2a4fd8" stroke-width="1.1" stroke-linecap="butt"/></g>
<g transform="translate(96,67) scale(0.9)"><circle cx="-0.8" cy="-1.2" r="3" fill="none" stroke="#444" stroke-width="0.8"/><line x1="-1.6" y1="4" x2="4.6" y2="-2" stroke="#2a4fd8" stroke-width="1.1" stroke-linecap="butt"/></g>
<g transform="translate(110,67) scale(0.9)"><path d="M-4.4,2.6 C-2.4,-1.6 0.8,1.8 4.4,-3" fill="none" stroke="#2a4fd8" stroke-width="1" stroke-linejoin="round" stroke-linecap="round" /><ellipse cx="0" cy="0" rx="1.6" ry="1.1" fill="#333" stroke="none" stroke-width="1"/></g>
<g transform="translate(124,67) scale(0.9)"><line x1="-4.6" y1="-2.4" x2="4.6" y2="-2.4" stroke="#333" stroke-width="1.1" stroke-linecap="butt"/><line x1="-2" y1="-1.6" x2="-2" y2="3.4" stroke="#333" stroke-width="1.1" stroke-linecap="butt"/><line x1="2" y1="-1.6" x2="2" y2="3.4" stroke="#2a4fd8" stroke-width="1.1" stroke-linecap="butt"/><path d="M-2,-2 L-0.6,0.2 H-3.4 Z" fill="#333" stroke="none" stroke-width="1" stroke-linejoin="round" stroke-linecap="round" /><path d="M2,-2 L3.4,0.2 H0.6 Z" fill="#2a4fd8" stroke="none" stroke-width="1" stroke-linejoin="round" stroke-linecap="round" /></g>
<g transform="translate(138,67) scale(0.9)"><circle cx="0" cy="0" r="4.2" fill="none" stroke="#444" stroke-width="0.9"/><circle cx="0" cy="0" r="2.3" fill="none" stroke="#2a4fd8" stroke-width="1.4"/></g>
<g transform="translate(153.6,67) scale(0.9)"><circle cx="0" cy="0" r="3.7" fill="none" stroke="#2a4fd8" stroke-width="1.1"/><line x1="0" y1="-4.4" x2="0" y2="4.4" stroke="#2a4fd8" stroke-width="1.1" stroke-linecap="butt"/><path d="M-2.6,-2.6 A3.7,3.7 0 0 0 -2.6,2.6" fill="none" stroke="#333" stroke-width="1.1" stroke-linejoin="round" stroke-linecap="round" /></g>
<g transform="translate(167.4,67) scale(0.9)"><line x1="-3.9" y1="-3" x2="-3.9" y2="3" stroke="#2a4fd8" stroke-width="1.3" stroke-linecap="butt"/><line x1="3.9" y1="-3" x2="3.9" y2="3" stroke="#2a4fd8" stroke-width="1.3" stroke-linecap="butt"/><line x1="-3.9" y1="0" x2="3.9" y2="0" stroke="#2a4fd8" stroke-width="2.2" stroke-linecap="butt"/></g>
<g transform="translate(187,67) scale(0.9)"><circle cx="-2.2" cy="1.8" r="2.0" fill="#1e1e1e" stroke="none" stroke-width="1"/><rect x="-4.300000000000001" y="2.2" width="4.2" height="1.8" fill="#1e1e1e" stroke="none" stroke-width="1" rx="0"/><circle cx="-2.7" cy="1.3" r="0.6" fill="#9a9a9a" stroke="none" stroke-width="1"/><line x1="-2.6" y1="-3.6" x2="3.8" y2="2.4" stroke="#3a5ae0" stroke-width="1" stroke-linecap="butt"/><line x1="-3.4" y1="-4.2" x2="-2" y2="-3" stroke="#3a5ae0" stroke-width="1.2" stroke-linecap="butt"/><line x1="3.8" y1="1.2" x2="3.8" y2="4" stroke="#3a5ae0" stroke-width="0.9" stroke-linecap="butt"/></g>
<g transform="translate(201,67) scale(0.9)"><circle cx="-2.2" cy="1.8" r="2.0" fill="#1e1e1e" stroke="none" stroke-width="1"/><rect x="-4.300000000000001" y="2.2" width="4.2" height="1.8" fill="#1e1e1e" stroke="none" stroke-width="1" rx="0"/><circle cx="-2.7" cy="1.3" r="0.6" fill="#9a9a9a" stroke="none" stroke-width="1"/><line x1="-3.8" y1="-3.2" x2="4" y2="-3.2" stroke="#3a5ae0" stroke-width="1.3" stroke-linecap="butt"/><line x1="-3.8" y1="-4.2" x2="-3.8" y2="-1.6" stroke="#3a5ae0" stroke-width="0.9" stroke-linecap="butt"/><line x1="4" y1="-4.2" x2="4" y2="-1.2" stroke="#3a5ae0" stroke-width="0.9" stroke-linecap="butt"/></g>
<g transform="translate(215,67) scale(0.9)"><circle cx="-2.4" cy="2" r="2.0" fill="#1e1e1e" stroke="none" stroke-width="1"/><rect x="-4.5" y="2.4" width="4.2" height="1.8" fill="#1e1e1e" stroke="none" stroke-width="1" rx="0"/><circle cx="-2.9" cy="1.5" r="0.6" fill="#9a9a9a" stroke="none" stroke-width="1"/><line x1="3" y1="-4" x2="3" y2="4" stroke="#3a5ae0" stroke-width="1.1" stroke-linecap="butt"/><line x1="1.6" y1="-4" x2="4.4" y2="-4" stroke="#3a5ae0" stroke-width="0.9" stroke-linecap="butt"/><line x1="1.6" y1="4" x2="4.4" y2="4" stroke="#3a5ae0" stroke-width="0.9" stroke-linecap="butt"/></g>
<g transform="translate(229,67) scale(0.9)"><circle cx="-2.2" cy="2.2" r="2.0" fill="#1e1e1e" stroke="none" stroke-width="1"/><rect x="-4.300000000000001" y="2.6" width="4.2" height="1.8" fill="#1e1e1e" stroke="none" stroke-width="1" rx="0"/><circle cx="-2.7" cy="1.7000000000000002" r="0.6" fill="#9a9a9a" stroke="none" stroke-width="1"/><path d="M-3.4,-0.6 A4,4 0 1 1 2.6,3.4" fill="none" stroke="#333" stroke-width="0.9" stroke-linejoin="round" stroke-linecap="round" /><line x1="-0.4" y1="2" x2="3" y2="-2.2" stroke="#3a5ae0" stroke-width="1" stroke-linecap="butt"/></g>
<g transform="translate(243,67) scale(0.9)"><circle cx="-2.2" cy="2.2" r="2.0" fill="#1e1e1e" stroke="none" stroke-width="1"/><rect x="-4.300000000000001" y="2.6" width="4.2" height="1.8" fill="#1e1e1e" stroke="none" stroke-width="1" rx="0"/><circle cx="-2.7" cy="1.7000000000000002" r="0.6" fill="#9a9a9a" stroke="none" stroke-width="1"/><path d="M-3.4,-0.6 A4,4 0 1 1 2.6,3.4" fill="none" stroke="#333" stroke-width="0.9" stroke-linejoin="round" stroke-linecap="round" /><line x1="-1.6" y1="-2.2" x2="3.2" y2="2.6" stroke="#3a5ae0" stroke-width="1" stroke-linecap="butt"/></g>
<g transform="translate(257,67) scale(0.9)"><circle cx="-2.2" cy="2" r="2.0" fill="#1e1e1e" stroke="none" stroke-width="1"/><rect x="-4.300000000000001" y="2.4" width="4.2" height="1.8" fill="#1e1e1e" stroke="none" stroke-width="1" rx="0"/><circle cx="-2.7" cy="1.5" r="0.6" fill="#9a9a9a" stroke="none" stroke-width="1"/><line x1="-0.4" y1="3.8" x2="2.2" y2="-3.6" stroke="#3a5ae0" stroke-width="1" stroke-linecap="butt"/><line x1="2.2" y1="-3.6" x2="4.2" y2="3.8" stroke="#3a5ae0" stroke-width="1" stroke-linecap="butt"/><line x1="0" y1="3.8" x2="4.4" y2="3.8" stroke="#3a5ae0" stroke-width="0.8" stroke-linecap="butt"/></g>
<g transform="translate(271,67) scale(0.9)"><circle cx="2.2" cy="2" r="2.0" fill="#1e1e1e" stroke="none" stroke-width="1"/><rect x="0.10000000000000009" y="2.4" width="4.2" height="1.8" fill="#1e1e1e" stroke="none" stroke-width="1" rx="0"/><circle cx="1.7000000000000002" cy="1.5" r="0.6" fill="#9a9a9a" stroke="none" stroke-width="1"/><line x1="-3.8" y1="-3.2" x2="4" y2="-3.2" stroke="#3a5ae0" stroke-width="1.2" stroke-linecap="butt"/><line x1="-3.8" y1="-4.2" x2="-3.8" y2="-1.6" stroke="#3a5ae0" stroke-width="0.9" stroke-linecap="butt"/><line x1="4" y1="-4.2" x2="4" y2="-1.6" stroke="#3a5ae0" stroke-width="0.9" stroke-linecap="butt"/><path d="M-2.6,-1.4 L-1.8,0.6 L0,0.8 L-1.6,2 L-1.8,4 L-2.8,2.4 L-4.4,2.6 L-3.4,1 Z" fill="#f0c020" stroke="none" stroke-width="1" stroke-linejoin="round" stroke-linecap="round" /></g>
<g transform="translate(291,67) scale(0.9)"><line x1="-4.2" y1="-3.9" x2="4.2" y2="-3.9" stroke="#4a62d0" stroke-width="1.2" stroke-linecap="butt"/><line x1="-4.2" y1="-2.4" x2="4.2" y2="-2.4" stroke="#6a7ad8" stroke-width="0.9" stroke-linecap="butt"/><line x1="-4.2" y1="-4.4" x2="-4.2" y2="-1.4" stroke="#4a62d0" stroke-width="0.8" stroke-linecap="butt"/><line x1="4.2" y1="-4.4" x2="4.2" y2="-1.4" stroke="#4a62d0" stroke-width="0.8" stroke-linecap="butt"/><circle cx="-2.2" cy="2.4" r="1.8" fill="#1e1e1e" stroke="none" stroke-width="1"/><rect x="-4.1" y="2.8" width="3.8" height="1.6" fill="#1e1e1e" stroke="none" stroke-width="1" rx="0"/><path d="M1.8,-0.8 L3.8,1.8 L2.6,1.8 L2.6,4.2 L1,4.2 L1,1.8 L-0.2,1.8 Z" fill="#f0c020" stroke="#8a6a10" stroke-width="0.3" stroke-linejoin="round" stroke-linecap="round" /></g>
<g transform="translate(305,67) scale(0.9)"><line x1="-4.2" y1="-3.9" x2="4.2" y2="-3.9" stroke="#4a62d0" stroke-width="1.2" stroke-linecap="butt"/><line x1="-4.2" y1="-2.4" x2="4.2" y2="-2.4" stroke="#6a7ad8" stroke-width="0.9" stroke-linecap="butt"/><line x1="-4.2" y1="-4.4" x2="-4.2" y2="-1.4" stroke="#4a62d0" stroke-width="0.8" stroke-linecap="butt"/><line x1="4.2" y1="-4.4" x2="4.2" y2="-1.4" stroke="#4a62d0" stroke-width="0.8" stroke-linecap="butt"/><circle cx="-2.2" cy="2.4" r="1.8" fill="#1e1e1e" stroke="none" stroke-width="1"/><rect x="-4.1" y="2.8" width="3.8" height="1.6" fill="#1e1e1e" stroke="none" stroke-width="1" rx="0"/><path d="M0.4,-0.2 H4 L2.4,2 L2.4,4.2" fill="none" stroke="#555" stroke-width="0.9" stroke-linejoin="round" stroke-linecap="round" /></g>
<g transform="translate(319,67) scale(0.9)"><line x1="-4.2" y1="-3.9" x2="4.2" y2="-3.9" stroke="#4a62d0" stroke-width="1.2" stroke-linecap="butt"/><line x1="-4.2" y1="-2.4" x2="4.2" y2="-2.4" stroke="#6a7ad8" stroke-width="0.9" stroke-linecap="butt"/><line x1="-4.2" y1="-4.4" x2="-4.2" y2="-1.4" stroke="#4a62d0" stroke-width="0.8" stroke-linecap="butt"/><line x1="4.2" y1="-4.4" x2="4.2" y2="-1.4" stroke="#4a62d0" stroke-width="0.8" stroke-linecap="butt"/><circle cx="-2.2" cy="2.4" r="1.8" fill="#1e1e1e" stroke="none" stroke-width="1"/><rect x="-4.1" y="2.8" width="3.8" height="1.6" fill="#1e1e1e" stroke="none" stroke-width="1" rx="0"/><circle cx="2.6" cy="2.6" r="1.8" fill="#3a3a3a" stroke="none" stroke-width="1"/><rect x="0.8" y="3" width="3.6" height="1.4" fill="#3a3a3a" stroke="none" stroke-width="1" rx="0"/></g>
<g transform="translate(333,67) scale(0.9)"><line x1="-4.2" y1="-3.9" x2="4.2" y2="-3.9" stroke="#4a62d0" stroke-width="1.2" stroke-linecap="butt"/><line x1="-4.2" y1="-2.4" x2="4.2" y2="-2.4" stroke="#6a7ad8" stroke-width="0.9" stroke-linecap="butt"/><line x1="-4.2" y1="-4.4" x2="-4.2" y2="-1.4" stroke="#4a62d0" stroke-width="0.8" stroke-linecap="butt"/><line x1="4.2" y1="-4.4" x2="4.2" y2="-1.4" stroke="#4a62d0" stroke-width="0.8" stroke-linecap="butt"/><circle cx="-1.8" cy="2.4" r="1.8" fill="#1e1e1e" stroke="none" stroke-width="1"/><rect x="-3.7" y="2.8" width="3.8" height="1.6" fill="#1e1e1e" stroke="none" stroke-width="1" rx="0"/><rect x="0.4" y="-0.4" width="4" height="3.2" fill="#f0c830" stroke="#9a7a10" stroke-width="0.4" rx="0"/></g>
<g transform="translate(351,67) scale(0.9)"><line x1="-4.2" y1="-3.9" x2="4.2" y2="-3.9" stroke="#4a62d0" stroke-width="1.2" stroke-linecap="butt"/><line x1="-4.2" y1="-2.4" x2="4.2" y2="-2.4" stroke="#6a7ad8" stroke-width="0.9" stroke-linecap="butt"/><line x1="-4.2" y1="-4.4" x2="-4.2" y2="-1.4" stroke="#4a62d0" stroke-width="0.8" stroke-linecap="butt"/><line x1="4.2" y1="-4.4" x2="4.2" y2="-1.4" stroke="#4a62d0" stroke-width="0.8" stroke-linecap="butt"/><circle cx="-2.2" cy="2.4" r="1.8" fill="#1e1e1e" stroke="none" stroke-width="1"/><rect x="-4.1" y="2.8" width="3.8" height="1.6" fill="#1e1e1e" stroke="none" stroke-width="1" rx="0"/><path d="M2.2,-0.8 L4.2,2 L0.2,2 Z" fill="#f0c830" stroke="#9a7a10" stroke-width="0.4" stroke-linejoin="round" stroke-linecap="round" /><rect x="1.5" y="2" width="1.4" height="2.2" fill="#f0c830" stroke="none" stroke-width="1" rx="0"/></g>
<g transform="translate(365,67) scale(0.9)"><line x1="-4.2" y1="-3.9" x2="4.2" y2="-3.9" stroke="#4a62d0" stroke-width="1.2" stroke-linecap="butt"/><line x1="-4.2" y1="-2.4" x2="4.2" y2="-2.4" stroke="#6a7ad8" stroke-width="0.9" stroke-linecap="butt"/><line x1="-4.2" y1="-4.4" x2="-4.2" y2="-1.4" stroke="#4a62d0" stroke-width="0.8" stroke-linecap="butt"/><line x1="4.2" y1="-4.4" x2="4.2" y2="-1.4" stroke="#4a62d0" stroke-width="0.8" stroke-linecap="butt"/><circle cx="-2.2" cy="2.4" r="1.8" fill="#1e1e1e" stroke="none" stroke-width="1"/><rect x="-4.1" y="2.8" width="3.8" height="1.6" fill="#1e1e1e" stroke="none" stroke-width="1" rx="0"/><path d="M1.8,-0.8 L3.8,1.8 L2.6,1.8 L2.6,4.2 L1,4.2 L1,1.8 L-0.2,1.8 Z" fill="#f0c020" stroke="#8a6a10" stroke-width="0.3" stroke-linejoin="round" stroke-linecap="round" /></g>
<g transform="translate(379,67) scale(0.9)"><line x1="-4.2" y1="-3.9" x2="4.2" y2="-3.9" stroke="#4a62d0" stroke-width="1.2" stroke-linecap="butt"/><line x1="-4.2" y1="-2.4" x2="4.2" y2="-2.4" stroke="#6a7ad8" stroke-width="0.9" stroke-linecap="butt"/><line x1="-4.2" y1="-4.4" x2="-4.2" y2="-1.4" stroke="#4a62d0" stroke-width="0.8" stroke-linecap="butt"/><line x1="4.2" y1="-4.4" x2="4.2" y2="-1.4" stroke="#4a62d0" stroke-width="0.8" stroke-linecap="butt"/><circle cx="-2.2" cy="2.4" r="1.8" fill="#1e1e1e" stroke="none" stroke-width="1"/><rect x="-4.1" y="2.8" width="3.8" height="1.6" fill="#1e1e1e" stroke="none" stroke-width="1" rx="0"/><rect x="0.6" y="-0.4" width="3.6" height="2.4" fill="#f0c830" stroke="#9a7a10" stroke-width="0.4" rx="0"/><line x1="2.4" y1="2" x2="2.4" y2="4.2" stroke="#555" stroke-width="0.9" stroke-linecap="butt"/></g>
<g transform="translate(396,67) scale(0.9)"><line x1="-4.2" y1="-3.8" x2="0.6" y2="-3.8" stroke="#4a62d0" stroke-width="1.1" stroke-linecap="butt"/><line x1="-4.2" y1="-2.4" x2="0.6" y2="-2.4" stroke="#8a96d8" stroke-width="0.8" stroke-linecap="butt"/><circle cx="-2.2" cy="2" r="1.8" fill="#1e1e1e" stroke="none" stroke-width="1"/><rect x="-4.1" y="2.4" width="3.8" height="1.6" fill="#1e1e1e" stroke="none" stroke-width="1" rx="0"/><line x1="1" y1="0.6" x2="4.2" y2="3.8" stroke="#e02020" stroke-width="1.3" stroke-linecap="butt"/><line x1="4.2" y1="0.6" x2="1" y2="3.8" stroke="#e02020" stroke-width="1.3" stroke-linecap="butt"/></g>
<g transform="translate(410,67) scale(0.9)"><line x1="-4.2" y1="-3.8" x2="0.6" y2="-3.8" stroke="#4a62d0" stroke-width="1.1" stroke-linecap="butt"/><line x1="-4.2" y1="-2.4" x2="0.6" y2="-2.4" stroke="#8a96d8" stroke-width="0.8" stroke-linecap="butt"/><circle cx="-2.2" cy="2" r="1.8" fill="#1e1e1e" stroke="none" stroke-width="1"/><rect x="-4.1" y="2.4" width="3.8" height="1.6" fill="#1e1e1e" stroke="none" stroke-width="1" rx="0"/><circle cx="2.4" cy="2" r="2.4" fill="#a4a4a4" stroke="#6a6a6a" stroke-width="0.6"/></g>
<g transform="translate(424,67) scale(0.9)"><rect x="-3.6" y="-3.8" width="5" height="5" fill="#e4ecff" stroke="#3a5ad8" stroke-width="0.9" rx="0"/><rect x="-0.8" y="-1" width="4.4" height="4.4" fill="#f4f7ff" stroke="#3a5ad8" stroke-width="0.9" rx="0"/></g>
<g transform="translate(8.2,87.0) scale(0.92)"><path d="M-4.4,1.6 L1,-3.8 L4.4,-1.2 L-0.6,3.6 Z" fill="#f0b0b0" stroke="#c07070" stroke-width="0.6" stroke-linejoin="round" stroke-linecap="round" /><line x1="-4.6" y1="4.2" x2="4.6" y2="4.2" stroke="#888" stroke-width="0.8" stroke-linecap="butt"/></g>
<g transform="translate(8.2,100.5) scale(0.92)"><line x1="-4.4" y1="-3.8" x2="4.4" y2="-3.8" stroke="#444" stroke-width="0.9" stroke-linecap="butt"/><circle cx="-0.6" cy="0.8" r="3.3" fill="#e8f0ff" stroke="#3a5ac0" stroke-width="0.9"/><rect x="-3.8" y="-2" width="6.2" height="5.4" fill="none" stroke="#555" stroke-width="0.7" rx="0"/><rect x="2" y="2.6" width="2.4" height="2.2" fill="#e02020" stroke="none" stroke-width="1" rx="0"/></g>
<g transform="translate(8.2,114.0) scale(0.92)"><rect x="0.8" y="-4.4" width="3.6" height="3.6" fill="#fff" stroke="#444" stroke-width="0.8" rx="0"/><rect x="-4.4" y="1" width="3.6" height="3.6" fill="#fff" stroke="#444" stroke-width="0.8" rx="0"/><line x1="-1.6" y1="1.6" x2="1.6" y2="-1.6" stroke="#2a4fd8" stroke-width="1.4" stroke-linecap="butt"/></g>
<g transform="translate(8.2,127.5) scale(0.92)"><path d="M-0.8,-4 L-4.4,4 H-0.8 Z" fill="#f4f4f4" stroke="#555" stroke-width="0.8" stroke-linejoin="round" stroke-linecap="round" /><path d="M0.8,-4 L4.4,4 H0.8 Z" fill="#f4f4f4" stroke="#555" stroke-width="0.8" stroke-linejoin="round" stroke-linecap="round" /></g>
<g transform="translate(8.2,141.0) scale(0.92)"><rect x="0.8" y="-4.4" width="3.6" height="3.6" fill="#fff" stroke="#444" stroke-width="0.8" rx="0"/><rect x="-4.4" y="1" width="3.6" height="3.6" fill="#fff" stroke="#999" stroke-width="0.7" rx="0"/><line x1="-1.6" y1="1.6" x2="1.6" y2="-1.6" stroke="#2a4fd8" stroke-width="1.4" stroke-linecap="butt"/></g>
<g transform="translate(8.2,154.5) scale(0.92)"><path d="M-4.2,-3.8 H3.6 V2 L1.6,4.2" fill="none" stroke="#444" stroke-width="1.1" stroke-linejoin="round" stroke-linecap="round" /><path d="M-4.2,-2 H1.8 V1.4" fill="none" stroke="#999" stroke-width="0.8" stroke-linejoin="round" stroke-linecap="round" /></g>
<g transform="translate(8.2,168.0) scale(0.92)"><rect x="-4.4" y="-4.4" width="2.2" height="2.2" fill="#3c3c3c" stroke="none" stroke-width="1" rx="0"/><rect x="-4.4" y="-1.1" width="2.2" height="2.2" fill="#3c3c3c" stroke="none" stroke-width="1" rx="0"/><rect x="-4.4" y="2.2" width="2.2" height="2.2" fill="#3c3c3c" stroke="none" stroke-width="1" rx="0"/><rect x="-1.1" y="-4.4" width="2.2" height="2.2" fill="#3c3c3c" stroke="none" stroke-width="1" rx="0"/><rect x="-1.1" y="-1.1" width="2.2" height="2.2" fill="#3c3c3c" stroke="none" stroke-width="1" rx="0"/><rect x="-1.1" y="2.2" width="2.2" height="2.2" fill="#3c3c3c" stroke="none" stroke-width="1" rx="0"/><rect x="2.2" y="-4.4" width="2.2" height="2.2" fill="#3c3c3c" stroke="none" stroke-width="1" rx="0"/><rect x="2.2" y="-1.1" width="2.2" height="2.2" fill="#3c3c3c" stroke="none" stroke-width="1" rx="0"/><rect x="2.2" y="2.2" width="2.2" height="2.2" fill="#3c3c3c" stroke="none" stroke-width="1" rx="0"/></g>
<g transform="translate(8.2,181.5) scale(0.92)"><path d="M-3,0 L0.6,-1.2 L4,1.4 L0.4,4 L-3.6,3 Z" fill="#f6f6f6" stroke="#444" stroke-width="0.8" stroke-linejoin="round" stroke-linecap="round" /><path d="M-3.6,-1.6 A3,3 0 0 1 1,-3.8" fill="none" stroke="#2a4fd8" stroke-width="1" stroke-linejoin="round" stroke-linecap="round" /><path d="M1.6,-4.8 L1.4,-2.6 L-0.4,-4 Z" fill="#2a4fd8" stroke="none" stroke-width="1" stroke-linejoin="round" stroke-linecap="round" /></g>
<g transform="translate(8.2,195.0) scale(0.92)"><rect x="-4.2" y="-4.2" width="8.4" height="8.4" fill="#fbfbfb" stroke="#444" stroke-width="0.9" rx="0"/><rect x="-4.2" y="0.2" width="4" height="4" fill="#dfe6f6" stroke="#444" stroke-width="0.7" rx="0"/><line x1="-0.4" y1="0.4" x2="3.4" y2="-3.4" stroke="#2a4fd8" stroke-width="1.1" stroke-linecap="butt"/></g>
<g transform="translate(8.2,208.5) scale(0.92)"><path d="M-4,-4 H-1.2 V1.2 H4 V4 H-4 Z" fill="#e6e6e6" stroke="#444" stroke-width="0.9" stroke-linejoin="round" stroke-linecap="round" /><rect x="0.2" y="1.6" width="2.6" height="1.8" fill="#2a4fd8" stroke="none" stroke-width="1" rx="0"/></g>
<g transform="translate(8.2,222.0) scale(0.92)"><path d="M-3.4,1 L0.2,-0.4 L4,1.6 L1.2,4.2 L-3.6,3.6 Z" fill="#f4f4f4" stroke="#444" stroke-width="0.8" stroke-linejoin="round" stroke-linecap="round" /><path d="M-2.8,-1.2 A3.4,3.4 0 0 1 2.8,-2.6" fill="none" stroke="#2a4fd8" stroke-width="1.2" stroke-linejoin="round" stroke-linecap="round" /><path d="M3.8,-4.4 L3.6,-1.6 L1.2,-3.2 Z" fill="#2a4fd8" stroke="none" stroke-width="1" stroke-linejoin="round" stroke-linecap="round" /></g>
<g transform="translate(8.2,235.5) scale(0.92)"><path d="M-4,-3.6 H0.4 A3.4,3.4 0 0 1 3.8,-0.2 V4.2" fill="none" stroke="#2a6fd8" stroke-width="1.5" stroke-linejoin="round" stroke-linecap="round" /><path d="M-4,-3.6 H-0.6" fill="none" stroke="#333" stroke-width="1.5" stroke-linejoin="round" stroke-linecap="round" /></g>
<g transform="translate(8.2,249.0) scale(0.92)"><path d="M-4,-3.6 H0.4 A3.4,3.4 0 0 1 3.8,-0.2 V4.2" fill="none" stroke="#2a6fd8" stroke-width="1.4" stroke-linejoin="round" stroke-linecap="round" /><line x1="-0.8" y1="0.8" x2="1" y2="0.8" stroke="#333" stroke-width="1" stroke-linecap="butt"/><line x1="0.1" y1="-0.1" x2="0.1" y2="1.7" stroke="#333" stroke-width="1" stroke-linecap="butt"/></g>
<g transform="translate(8.2,262.5) scale(0.92)"><path d="M2.4,-3.8 H-2.4 A1.6,1.6 0 0 0 -4,-2.2 V2.2 A1.6,1.6 0 0 0 -2.4,3.8 H2.4" fill="none" stroke="#444" stroke-width="1" stroke-linejoin="round" stroke-linecap="round" /><line x1="3.6" y1="-1.4" x2="3.6" y2="1.4" stroke="#2a6fd8" stroke-width="1.3" stroke-linecap="butt"/></g>
<g transform="translate(8.2,276.0) scale(0.92)"><path d="M2.4,-3.8 H-2.4 A1.6,1.6 0 0 0 -4,-2.2 V2.2 A1.6,1.6 0 0 0 -2.4,3.8 H2.4" fill="none" stroke="#444" stroke-width="1" stroke-linejoin="round" stroke-linecap="round" /><line x1="3.6" y1="-2.4" x2="3.6" y2="-0.6" stroke="#2a6fd8" stroke-width="1.3" stroke-linecap="butt"/><line x1="3.6" y1="0.6" x2="3.6" y2="2.4" stroke="#2a6fd8" stroke-width="1.3" stroke-linecap="butt"/></g>
<g transform="translate(8.2,289.5) scale(0.92)"><line x1="-4.6" y1="0" x2="-1" y2="0" stroke="#2a6fd8" stroke-width="1.3" stroke-linecap="butt"/><line x1="1" y1="0" x2="4.6" y2="0" stroke="#2a6fd8" stroke-width="1.3" stroke-linecap="butt"/><path d="M-1,0 L-2.8,-1.6 V1.6 Z M1,0 L2.8,-1.6 V1.6 Z" fill="#2a6fd8" stroke="none" stroke-width="1" stroke-linejoin="round" stroke-linecap="round" /></g>
<g transform="translate(8.2,303.0) scale(0.92)"><line x1="-4.2" y1="-3.2" x2="4.2" y2="-3.2" stroke="#222" stroke-width="1.7" stroke-linecap="butt"/><line x1="0" y1="-2.4" x2="0" y2="3.2" stroke="#4a8ad8" stroke-width="1.7" stroke-linecap="butt"/><line x1="0" y1="3.2" x2="0" y2="4.6" stroke="#222" stroke-width="1.4" stroke-linecap="butt"/></g>
<g transform="translate(8.2,316.5) scale(0.92)"><line x1="-4" y1="-3.4" x2="3.2" y2="2.8" stroke="#d8901a" stroke-width="1.2" stroke-linecap="butt"/><line x1="-4" y1="2.4" x2="3.2" y2="-3.6" stroke="#777" stroke-width="1.2" stroke-linecap="butt"/><circle cx="-3.6" cy="3.6" r="1.3" fill="none" stroke="#444" stroke-width="0.8"/><circle cx="3.6" cy="3.6" r="1.3" fill="none" stroke="#444" stroke-width="0.8"/></g>
<g transform="translate(8.2,330.5) scale(0.92)"><path d="M-1,-4 H4.2 M-1,-4 V4.4 M-1,0 H3" fill="none" stroke="#444" stroke-width="1.3" stroke-linejoin="round" stroke-linecap="round" /><line x1="-4.4" y1="-2" x2="3.6" y2="-2" stroke="#4a9ad8" stroke-width="0.7" stroke-linecap="butt"/><line x1="-3" y1="-4.6" x2="-3" y2="2" stroke="#4a9ad8" stroke-width="0.7" stroke-linecap="butt"/></g>
<g transform="translate(8.2,344.0) scale(0.92)"><line x1="-4.4" y1="1" x2="4.4" y2="1" stroke="#4a9ad8" stroke-width="0.8" stroke-linecap="butt"/><line x1="0.4" y1="-4.6" x2="0.4" y2="4.6" stroke="#4a9ad8" stroke-width="0.8" stroke-linecap="butt"/><path d="M0.4,-3 H3.6" fill="none" stroke="#2a4fd8" stroke-width="1.3" stroke-linejoin="round" stroke-linecap="round" /><line x1="-3.8" y1="1" x2="-1" y2="1" stroke="#444" stroke-width="1.2" stroke-linecap="butt"/></g>
<g transform="translate(8.2,357.5) scale(0.92)"><rect x="-4.4" y="-0.4" width="8.8" height="4.6" fill="#b8b0a0" stroke="#6a6458" stroke-width="0.5" rx="0"/><path d="M-3.6,-1 L-1,-4.2 H3.2 L4.2,-2.4 L1.6,-0.4 Z" fill="#e8a850" stroke="#9a6a20" stroke-width="0.5" stroke-linejoin="round" stroke-linecap="round" /><line x1="-4.4" y1="2" x2="4.4" y2="2" stroke="#8a8478" stroke-width="0.6" stroke-linecap="butt"/></g>
<g transform="translate(8.2,371.0) scale(0.92)"><rect x="-4.2" y="-4.2" width="6" height="6" fill="#f4e27a" stroke="#b8a030" stroke-width="0.6" rx="0"/><rect x="-1.4" y="-1.4" width="5.8" height="5.8" fill="#cfe2f8" stroke="#6a90c0" stroke-width="0.6" rx="0"/></g>
<g transform="translate(8.2,384.5) scale(0.92)"><path d="M0,-4.4 L4.4,-0.6 L0,4.6 L-4.4,-0.6 Z" fill="#d8963a" stroke="#8a5a1a" stroke-width="0.6" stroke-linejoin="round" stroke-linecap="round" /><path d="M-2.2,-1.4 L0,-3 L2.2,-1.4 L0,0.4 Z" fill="#f4dca0" stroke="#8a5a1a" stroke-width="0.4" stroke-linejoin="round" stroke-linecap="round" /><rect x="-1" y="1" width="2" height="2.4" fill="#f6f6f6" stroke="none" stroke-width="1" rx="0"/></g>
<g transform="translate(8.2,398.0) scale(0.92)"><circle cx="-0.2" cy="1.4" r="2.8" fill="#222" stroke="none" stroke-width="1"/><circle cx="-1" cy="0.6" r="0.7" fill="#8a8a8a" stroke="none" stroke-width="1"/><path d="M1,-1.2 L2.4,-3" fill="none" stroke="#555" stroke-width="0.9" stroke-linejoin="round" stroke-linecap="round" /><circle cx="2.8" cy="-3.6" r="0.9" fill="#e88020" stroke="none" stroke-width="1"/></g>
<g transform="translate(8.4,409.2) scale(0.8)"><path d="M-1.6,-2.6 L0,-1 L1.6,-2.6 M-1.6,0.4 L0,2 L1.6,0.4" fill="none" stroke="#222" stroke-width="1.1" stroke-linejoin="round" stroke-linecap="round" /></g>
<g transform="translate(24.2,86.5) scale(0.86)"><path d="M-3.4,3.4 V-3.4 H3.6" fill="none" stroke="#777" stroke-width="0.8" stroke-linejoin="round" stroke-linecap="round" stroke-dasharray="1.2,0.8"/><circle cx="-3.4" cy="-3.4" r="1.1" fill="#b03050" stroke="none" stroke-width="1"/><circle cx="-3.4" cy="3.4" r="1.1" fill="#555" stroke="none" stroke-width="1"/><circle cx="3.6" cy="-3.4" r="1.1" fill="#555" stroke="none" stroke-width="1"/></g>
<g transform="translate(24.2,100.5) scale(0.86)"><line x1="-3.6" y1="0" x2="3.6" y2="0" stroke="#777" stroke-width="0.8" stroke-linecap="butt"/><circle cx="-3.6" cy="0" r="1.1" fill="#b03050" stroke="none" stroke-width="1"/><circle cx="0.4" cy="0" r="1" fill="#b03050" stroke="none" stroke-width="1"/><circle cx="3.8" cy="0" r="1" fill="#777" stroke="none" stroke-width="1"/></g>
<g transform="translate(24.2,117) scale(0.86)"><line x1="-4" y1="-3.8" x2="3.8" y2="4" stroke="#555" stroke-width="0.9" stroke-linecap="butt"/><line x1="-4" y1="4" x2="3.8" y2="-3.8" stroke="#555" stroke-width="0.9" stroke-linecap="butt"/><circle cx="0" cy="0" r="1.2" fill="#b03050" stroke="none" stroke-width="1"/></g>
<g transform="translate(24.2,130.5) scale(0.86)"><line x1="-4" y1="-3.8" x2="3.8" y2="4" stroke="#555" stroke-width="0.9" stroke-linecap="butt"/><line x1="-4" y1="4" x2="3.8" y2="-3.8" stroke="#555" stroke-width="0.9" stroke-linecap="butt"/><circle cx="0" cy="0" r="1.2" fill="#b03050" stroke="none" stroke-width="1"/></g>
<g transform="translate(24.2,144) scale(0.86)"><line x1="-3.6" y1="-3.6" x2="3.6" y2="3.6" stroke="#a03040" stroke-width="1" stroke-linecap="butt"/><circle cx="-3.6" cy="-3.6" r="1.1" fill="#b03050" stroke="none" stroke-width="1"/><circle cx="3.6" cy="3.6" r="1.1" fill="#b03050" stroke="none" stroke-width="1"/><circle cx="0" cy="0" r="1" fill="#8a2030" stroke="none" stroke-width="1"/></g>
<g transform="translate(24.2,157.5) scale(0.86)"><line x1="-4.4" y1="-1.8" x2="4.4" y2="-1.8" stroke="#777" stroke-width="0.9" stroke-linecap="butt"/><line x1="0" y1="-4.4" x2="0" y2="4.4" stroke="#777" stroke-width="0.9" stroke-linecap="butt"/><circle cx="0" cy="-1.8" r="1.1" fill="#b03050" stroke="none" stroke-width="1"/></g>
<g transform="translate(24.2,171) scale(0.86)"><line x1="-4" y1="4" x2="4" y2="-4" stroke="#555" stroke-width="0.9" stroke-linecap="butt"/><circle cx="0.4" cy="-0.4" r="1.1" fill="#b03050" stroke="none" stroke-width="1"/></g>
<g transform="translate(24.2,188) scale(0.86)"><circle cx="0" cy="0" r="3.9" fill="none" stroke="#444" stroke-width="0.9"/><circle cx="0" cy="0" r="1.1" fill="#b03050" stroke="none" stroke-width="1"/></g>
<g transform="translate(24.2,201.5) scale(0.86)"><circle cx="0" cy="0" r="3.7" fill="none" stroke="#c03040" stroke-width="1"/><circle cx="0" cy="-3.7" r="0.9" fill="#b03050" stroke="none" stroke-width="1"/><circle cx="0" cy="3.7" r="0.9" fill="#b03050" stroke="none" stroke-width="1"/><circle cx="-3.7" cy="0" r="0.9" fill="#b03050" stroke="none" stroke-width="1"/><circle cx="3.7" cy="0" r="0.9" fill="#b03050" stroke="none" stroke-width="1"/></g>
<g transform="translate(24.2,215) scale(0.86)"><circle cx="-0.4" cy="1.2" r="3" fill="none" stroke="#444" stroke-width="0.9"/><line x1="-3.6" y1="-3.8" x2="4" y2="2.6" stroke="#c03040" stroke-width="1.1" stroke-linecap="butt"/></g>
<g transform="translate(24.2,232) scale(0.86)"><rect x="-4" y="-4" width="8" height="8" fill="#f6f6f6" stroke="#bbb" stroke-width="0.6" rx="0"/><text x="0.4" y="2.8" text-anchor="middle" font-family="Liberation Sans, sans-serif" font-size="7" fill="#555">A</text><circle cx="-2.6" cy="2.6" r="0.9" fill="#b03050" stroke="none" stroke-width="1"/></g>
<g transform="translate(24.2,245.5) scale(0.86)"><line x1="-3.6" y1="3.6" x2="3.6" y2="-3.6" stroke="#8a3040" stroke-width="0.9" stroke-linecap="butt"/><circle cx="-3.6" cy="3.6" r="1" fill="#b03050" stroke="none" stroke-width="1"/><circle cx="3.6" cy="-3.6" r="1" fill="#2a4fd8" stroke="none" stroke-width="1"/><circle cx="0" cy="0" r="1" fill="#2a4fd8" stroke="none" stroke-width="1"/></g>
<g transform="translate(24.2,259) scale(0.86)"><line x1="-4" y1="-2" x2="1.6" y2="4.2" stroke="#a03040" stroke-width="1.1" stroke-linecap="butt"/><line x1="-1.6" y1="-4.2" x2="4" y2="2" stroke="#a03040" stroke-width="1.1" stroke-linecap="butt"/></g>
<g transform="translate(24.2,272.5) scale(0.86)"><line x1="-4.2" y1="-3.6" x2="3.8" y2="4.2" stroke="#333" stroke-width="1" stroke-linecap="butt"/><line x1="-2.8" y1="4.2" x2="3.8" y2="-3.6" stroke="#a03040" stroke-width="1" stroke-linecap="butt"/><path d="M-0.6,3.6 L1.4,4.4 L2,2.4" fill="none" stroke="#333" stroke-width="0.8" stroke-linejoin="round" stroke-linecap="round" /></g>
<g transform="translate(24.2,289) scale(0.86)"><line x1="-4.2" y1="4.2" x2="3.6" y2="-3.8" stroke="#555" stroke-width="0.9" stroke-linecap="butt"/><line x1="-0.8" y1="0.6" x2="4" y2="3.4" stroke="#a03040" stroke-width="0.9" stroke-linecap="butt"/></g>
<g transform="translate(24.2,302.5) scale(0.86)"><line x1="-3.6" y1="-4.4" x2="-3.6" y2="4.4" stroke="#555" stroke-width="1.1" stroke-linecap="butt"/><line x1="-3.6" y1="1" x2="4.2" y2="1" stroke="#c03040" stroke-width="0.8" stroke-linecap="butt"/><circle cx="0.2" cy="-1" r="1.1" fill="#2a4fd8" stroke="none" stroke-width="1"/><circle cx="3.2" cy="-1.6" r="1.1" fill="#b03050" stroke="none" stroke-width="1"/></g>
<g transform="translate(24.2,319) scale(0.86)"><line x1="-3.6" y1="-4.4" x2="-3.6" y2="4.4" stroke="#555" stroke-width="1.1" stroke-linecap="butt"/><path d="M-2,-1 L0.4,-3.8 H3.6 L4.4,-2.4 L2,-0.6 Z" fill="#e8a850" stroke="#9a6a20" stroke-width="0.5" stroke-linejoin="round" stroke-linecap="round" /><circle cx="-0.4" cy="2.6" r="1" fill="#b03050" stroke="none" stroke-width="1"/><circle cx="2.8" cy="2.6" r="1" fill="#2a4fd8" stroke="none" stroke-width="1"/></g>
<g transform="translate(40.2,87.0) scale(0.86)"><line x1="-3.8" y1="-3.8" x2="3.8" y2="3.8" stroke="#8a7a2a" stroke-width="1" stroke-linecap="butt"/><circle cx="-3.8" cy="-3.8" r="1.1" fill="#8a7a2a" stroke="none" stroke-width="1"/><circle cx="3.8" cy="3.8" r="1.1" fill="#8a7a2a" stroke="none" stroke-width="1"/></g>
<g transform="translate(40.2,100.5) scale(0.86)"><line x1="-3.8" y1="-3.8" x2="3.8" y2="3.8" stroke="#222" stroke-width="1" stroke-linecap="butt"/><circle cx="-3.8" cy="-3.8" r="1.1" fill="#222" stroke="none" stroke-width="1"/><circle cx="3.8" cy="3.8" r="1.1" fill="#222" stroke="none" stroke-width="1"/><circle cx="0" cy="0" r="0.9" fill="#8a7a2a" stroke="none" stroke-width="1"/></g>
<g transform="translate(40.2,114.0) scale(0.86)"><path d="M-2.2,-4 H2.2 L4.4,0 L2.2,4 H-2.2 L-4.4,0 Z" fill="none" stroke="#333" stroke-width="1" stroke-linejoin="round" stroke-linecap="round" /></g>
<g transform="translate(40.2,127.5) scale(0.86)"><rect x="-4.2" y="-2.8" width="8.4" height="5.6" fill="none" stroke="#333" stroke-width="1" rx="0"/><circle cx="-4.2" cy="-2.8" r="0.9" fill="#8a7a2a" stroke="none" stroke-width="1"/><circle cx="4.2" cy="2.8" r="0.9" fill="#8a7a2a" stroke="none" stroke-width="1"/></g>
<g transform="translate(40.2,141.0) scale(0.86)"><path d="M-3.4,3.2 A3.8,3.8 0 1 1 3.6,1.2" fill="none" stroke="#333" stroke-width="1.1" stroke-linejoin="round" stroke-linecap="round" /><circle cx="-3.4" cy="3.2" r="1" fill="#8a7a2a" stroke="none" stroke-width="1"/><circle cx="3.6" cy="1.2" r="1" fill="#8a7a2a" stroke="none" stroke-width="1"/></g>
<g transform="translate(40.2,154.5) scale(0.86)"><path d="M-4,-3.4 C0,-3.6 3.2,-0.8 3.8,3.8" fill="none" stroke="#333" stroke-width="1.2" stroke-linejoin="round" stroke-linecap="round" /><circle cx="-4" cy="-3.4" r="1" fill="#8a7a2a" stroke="none" stroke-width="1"/><circle cx="3.8" cy="3.8" r="1" fill="#8a7a2a" stroke="none" stroke-width="1"/></g>
<g transform="translate(40.2,168.0) scale(0.86)"><circle cx="0" cy="0" r="4" fill="none" stroke="#333" stroke-width="1"/><line x1="0" y1="0" x2="2.8" y2="2.8" stroke="#8a7a2a" stroke-width="0.9" stroke-linecap="butt"/><circle cx="0" cy="0" r="0.9" fill="#8a7a2a" stroke="none" stroke-width="1"/></g>
<g transform="translate(40.2,181.5) scale(0.86)"><ellipse cx="0" cy="0" rx="4.6" ry="2.7" fill="none" stroke="#333" stroke-width="1" transform="rotate(-40 0 0)"/><circle cx="0" cy="0" r="1" fill="#8a7a2a" stroke="none" stroke-width="1"/><circle cx="-3.4" cy="3" r="0.9" fill="#8a7a2a" stroke="none" stroke-width="1"/><circle cx="3.4" cy="-3" r="0.9" fill="#8a7a2a" stroke="none" stroke-width="1"/></g>
<g transform="translate(40.2,195.0) scale(0.86)"><path d="M-4,3.4 A4.4,4.4 0 0 1 4.2,0.6 M-1.6,3.6 A2.2,2.2 0 0 1 2.4,2" fill="none" stroke="#333" stroke-width="1" stroke-linejoin="round" stroke-linecap="round" /><circle cx="-4" cy="3.4" r="0.9" fill="#8a7a2a" stroke="none" stroke-width="1"/></g>
<g transform="translate(40.2,208.5) scale(0.86)"><circle cx="-3.4" cy="-3.6" r="0.95" fill="#8a7a2a" stroke="none" stroke-width="1"/><circle cx="0.4" cy="-3.8" r="0.95" fill="#8a7a2a" stroke="none" stroke-width="1"/><circle cx="3.6" cy="-1.6" r="0.95" fill="#8a7a2a" stroke="none" stroke-width="1"/><circle cx="-1.2" cy="-0.6" r="0.95" fill="#8a7a2a" stroke="none" stroke-width="1"/><circle cx="2" cy="1.4" r="0.95" fill="#8a7a2a" stroke="none" stroke-width="1"/><circle cx="-3.6" cy="1.6" r="0.95" fill="#8a7a2a" stroke="none" stroke-width="1"/><circle cx="-0.6" cy="3.6" r="0.95" fill="#8a7a2a" stroke="none" stroke-width="1"/><circle cx="3.4" cy="3.8" r="0.95" fill="#8a7a2a" stroke="none" stroke-width="1"/></g>
<g transform="translate(40.2,222.0) scale(0.86)"><path d="M-4,3.6 C-3.4,-1.6 -0.6,-1.4 0,0.6 C0.6,2.6 3.2,1.4 3.8,-3.8" fill="none" stroke="#333" stroke-width="1.1" stroke-linejoin="round" stroke-linecap="round" /><circle cx="-4" cy="3.6" r="1" fill="#8a7a2a" stroke="none" stroke-width="1"/><circle cx="3.8" cy="-3.8" r="1" fill="#8a7a2a" stroke="none" stroke-width="1"/></g>
<g transform="translate(40.2,235.5) scale(0.86)"><rect x="-4.4" y="-4.4" width="8.8" height="8.8" fill="#a8a8a8" stroke="#9a9a9a" stroke-width="0.5" rx="0"/></g>
<g transform="translate(40.2,249.0) scale(0.86)"><rect x="-4.2" y="-4.4" width="6.4" height="7.6" fill="#f4f4f4" stroke="#888" stroke-width="0.6" rx="0"/><text x="-1" y="1.8" text-anchor="middle" font-family="Liberation Sans, sans-serif" font-size="6.4" fill="#444">A</text><circle cx="2.6" cy="2.6" r="2.3" fill="#30b030" stroke="#1a801a" stroke-width="0.5"/></g>
<g transform="translate(40.2,262.5) scale(0.86)"><rect x="-4.4" y="-3.6" width="8.8" height="7.2" fill="#f0c830" stroke="#a8881a" stroke-width="0.7" rx="1.4"/><rect x="-2.4" y="-1.6" width="4.8" height="3.2" fill="#fbeea0" stroke="#a8881a" stroke-width="0.5" rx="0.6"/></g>
<g transform="translate(40.2,276.0) scale(0.86)"><rect x="-4.4" y="-4" width="8.8" height="8" fill="#efefef" stroke="#999" stroke-width="0.7" rx="0"/><text x="-1" y="0.8" text-anchor="middle" font-family="Liberation Sans, sans-serif" font-size="4.6" fill="#555">A</text><line x1="-3" y1="2.6" x2="3" y2="2.6" stroke="#aaa" stroke-width="0.6" stroke-linecap="butt"/></g>
<g transform="translate(40.2,289.5) scale(0.86)"><rect x="-4.4" y="-2.6" width="8.8" height="5.2" fill="#efefef" stroke="#999" stroke-width="0.7" rx="0"/><text x="-1.2" y="1.2" text-anchor="middle" font-family="Liberation Sans, sans-serif" font-size="4.2" fill="#555">A</text></g>
<g transform="translate(40.2,303.0) scale(0.86)"><rect x="-4.4" y="-4.2" width="8.4" height="8.4" fill="#f6f6f6" stroke="#333" stroke-width="0.7" rx="0"/><line x1="-2.6" y1="2.8" x2="3.6" y2="-3.4" stroke="#e8b820" stroke-width="1.9" stroke-linecap="butt"/><line x1="-3.2" y1="3.4" x2="-2.4" y2="2.6" stroke="#333" stroke-width="1.4" stroke-linecap="butt"/></g>
<g transform="translate(40.2,316.5) scale(0.86)"><path d="M-4.2,-4.2 H4.2 V4.2 H-4.2 Z" fill="none" stroke="#333" stroke-width="0.9" stroke-linejoin="round" stroke-linecap="round" stroke-dasharray="1.6,1"/></g>
<g transform="translate(40.2,330.5) scale(0.86)"><path d="M0,-4.6 L2.6,-2.8 L4.4,0 L2.8,2.8 L0,4.6 L-2.8,2.8 L-4.4,0 L-2.6,-2.8 Z" fill="none" stroke="#444" stroke-width="0.8" stroke-linejoin="round" stroke-linecap="round" /></g>
<g transform="translate(40.2,344.0) scale(0.86)"><path d="M-1.2,-3.8 L1.6,-2.8 L3.6,-3.8 L4.2,-0.8 L2.2,0.6 L2.6,3.8 L-1.6,4 L-2,1.4 L-4.4,0.6 L-3.2,-2 Z" fill="none" stroke="#444" stroke-width="0.8" stroke-linejoin="round" stroke-linecap="round" /></g>
<path d="M139.4,78.6 L143.6,82.8 M143.6,78.6 L139.4,82.8" stroke="#222" stroke-width="1.1" fill="none"/>
<path d="M156,81.1 H161.6 M158.8,78.3 V83.9" stroke="#333" stroke-width="1" fill="none"/>
<rect x="48.5" y="90.4" width="420.5" height="254.8" fill="#000"/>
<g stroke="#e6e6e6" stroke-width="0.7" fill="none"><rect x="118" y="314.3" width="4.5" height="4.5"/><path d="M118,316.55 H122.5 M120.25,314.3 V318.8"/><path d="M120.25,314.3 V286.4 M118.6,289.4 L120.25,286.2 L121.9,289.4"/><path d="M122.5,316.55 H150.4 M147.4,314.9 L150.6,316.55 L147.4,318.2"/></g><text x="120.3" y="284.7" text-anchor="middle" font-family="Liberation Sans, sans-serif" font-size="6.6" fill="#e2e2e2">Y</text><text x="154.6" y="318.9" text-anchor="middle" font-family="Liberation Sans, sans-serif" font-size="6.4" fill="#e2e2e2">X</text>
<path d="M465.4,148.6 H468.8 V151.2 H465.4 Z M468,151.2 V155.4" stroke="#f4f4f4" stroke-width="0.9" fill="none"/>
<g stroke="#4a4a4a" stroke-width="0.7"><path d="M110.6,345.4 C112.4,346 112.2,352.4 115,352.4 H134 C137,352.4 136.8,346 139,345.4" fill="#d6d6d6"/><path d="M81,345.4 C83,346 82.8,352.4 85.6,352.4 H106.4 C109.4,352.4 109,346 111.2,345.4" fill="#d6d6d6"/><path d="M49.2,345.4 C51.2,346 51,352.6 54,352.6 H76 C79.4,352.6 79,346 81.4,345.4" fill="#ffffff"/></g>
<path d="M592.6,359.4 L596,362.8 M596,359.4 L592.6,362.8" stroke="#1a1a1a" stroke-width="1.15" fill="none"/>
<path d="M457.2,420 H460.8 L459,422 Z" fill="#222"/>
<path d="M592.4,78.8 L596,82.4 M596,78.8 L592.4,82.4" stroke="#1a1a1a" stroke-width="1.15" fill="none"/>
<path d="M589.4000000000001,97.2 L591.2,99.2 L593.0,97.2" fill="none" stroke="#444" stroke-width="0.9"/>
<g transform="translate(483.2,112.3) scale(1.12)"><rect x="-4.6" y="-4.6" width="9.2" height="9.2" fill="#e6e6e6" stroke="#b4b4b4" stroke-width="0.6" rx="0.6"/><rect x="-3" y="-3" width="6" height="6" fill="#c8e8d8" stroke="#5aa080" stroke-width="0.5" rx="0"/><path d="M-1.6,0.8 A2,2 0 1 1 1.4,1.4" fill="none" stroke="#3a7ad8" stroke-width="0.9" stroke-linejoin="round" stroke-linecap="round" /><path d="M0.6,2.6 L1.8,1 L2.6,2.4 Z" fill="#3a7ad8" stroke="none" stroke-width="1" stroke-linejoin="round" stroke-linecap="round" /></g>
<g transform="translate(498.09999999999997,112.3) scale(1.12)"><rect x="-4.6" y="-4.6" width="9.2" height="9.2" fill="#e6e6e6" stroke="#b4b4b4" stroke-width="0.6" rx="0.6"/><path d="M-2.8,-2.6 H1.4 V1.4 H-2.8 Z" fill="none" stroke="#555" stroke-width="0.7" stroke-linejoin="round" stroke-linecap="round" /><path d="M0.6,0 L3.4,2.4 L1.8,2.6 L2.6,4 L1.8,4.2 L1.2,3 L0.4,3.8 Z" fill="#222" stroke="none" stroke-width="1" stroke-linejoin="round" stroke-linecap="round" /></g>
<g transform="translate(513.0,112.3) scale(1.12)"><rect x="-4.6" y="-4.6" width="9.2" height="9.2" fill="#e6e6e6" stroke="#b4b4b4" stroke-width="0.6" rx="0.6"/><circle cx="-0.6" cy="-0.6" r="2.5" fill="#cfcfcf" stroke="#333" stroke-width="1"/><line x1="1.4" y1="1.4" x2="3.4" y2="3.4" stroke="#222" stroke-width="1.4" stroke-linecap="butt"/><rect x="1" y="-3.4" width="2.2" height="2.2" fill="#fafafa" stroke="#555" stroke-width="0.5" rx="0"/></g>
<g transform="translate(527.9,112.3) scale(1.12)"><rect x="-4.6" y="-4.6" width="9.2" height="9.2" fill="#e6e6e6" stroke="#b4b4b4" stroke-width="0.6" rx="0.6"/><circle cx="-0.8" cy="-0.8" r="2.4" fill="#c4c4c4" stroke="#555" stroke-width="0.7"/><path d="M1.8,-2.2 L0,1 H1.4 L0.6,4 L3.8,-0.2 H2.2 L3.2,-2.2 Z" fill="#f0c020" stroke="#a07a10" stroke-width="0.4" stroke-linejoin="round" stroke-linecap="round" /></g>
<g transform="translate(542.8,112.3) scale(1.12)"><rect x="-4.6" y="-4.6" width="9.2" height="9.2" fill="#5f8fd2" stroke="#4a72b8" stroke-width="0.5" rx="0.8"/><rect x="-3.6" y="-3.6" width="7.2" height="3.6" fill="#86aee4" stroke="none" stroke-width="1" rx="0"/><text x="0.1" y="2.9" text-anchor="middle" font-family="Liberation Sans, sans-serif" font-size="7.6" font-weight="bold" fill="#ffffff">?</text></g>
<path d="M587.8,127 L589.8,125 L591.8,127" fill="none" stroke="#444" stroke-width="0.9"/>
<path d="M587.8,341.6 L589.8,343.6 L591.8,341.6" fill="none" stroke="#444" stroke-width="0.9"/>
<path d="M571.8,132.29999999999998 H577.2 L574.5,129.1 Z" fill="#111"/>
<path d="M573.4000000000001,142.4 L575.2,144.4 L577.0,142.4" fill="none" stroke="#444" stroke-width="0.9"/>
<g transform="translate(491.6,143.2) scale(0.88)"><circle cx="-0.8" cy="-0.4" r="2.9" fill="#c8d0f0" stroke="#3a4ab0" stroke-width="1.3"/><circle cx="-0.8" cy="-0.6" r="1" fill="#f4f4f4" stroke="none" stroke-width="1"/><path d="M0,1.2 L3.4,-4 L4.6,-3 L1.2,2 Z" fill="#e8a820" stroke="#9a6a10" stroke-width="0.4" stroke-linejoin="round" stroke-linecap="round" /><path d="M-3.6,2.4 C-1.4,5 2.4,4.4 3.8,1.8" fill="none" stroke="#3a4ab0" stroke-width="1" stroke-linejoin="round" stroke-linecap="round" /></g>
<g transform="translate(508.4,143.3) scale(0.8)"><circle cx="0" cy="0" r="2.9" fill="#fdfdfd" stroke="#444" stroke-width="0.8"/></g>
<path d="M573.4000000000001,152.8 L575.2,154.8 L577.0,152.8" fill="none" stroke="#444" stroke-width="0.9"/>
<g transform="translate(491.6,153.6) scale(0.88)"><path d="M-4.6,1 L-1,-2 H4.6 L1.4,1 Z" fill="#d8c870" stroke="#8a7a2a" stroke-width="0.5" stroke-linejoin="round" stroke-linecap="round" /><path d="M-4.6,1 H1.4 V3.4 H-4.6 Z" fill="#a89a50" stroke="#7a6a20" stroke-width="0.4" stroke-linejoin="round" stroke-linecap="round" /><path d="M1.4,1 L4.6,-2 V0.6 L1.4,3.4 Z" fill="#8a7a3a" stroke="none" stroke-width="1" stroke-linejoin="round" stroke-linecap="round" /></g>
<path d="M573.4000000000001,163.20000000000002 L575.2,165.20000000000002 L577.0,163.20000000000002" fill="none" stroke="#444" stroke-width="0.9"/>
<g transform="translate(491.6,164.0) scale(0.88)"><rect x="-4.6" y="-4.2" width="9.2" height="2" fill="#222" stroke="none" stroke-width="1" rx="0"/><rect x="-4.6" y="-1" width="2" height="1.6" fill="#222" stroke="none" stroke-width="1" rx="0"/><rect x="-1.2" y="-1" width="2" height="1.6" fill="#222" stroke="none" stroke-width="1" rx="0"/><rect x="2.4" y="-1" width="2" height="1.6" fill="#222" stroke="none" stroke-width="1" rx="0"/><rect x="-4.6" y="1.6" width="1.2" height="1.2" fill="#222" stroke="none" stroke-width="1" rx="0"/><rect x="-2.4" y="1.6" width="1.2" height="1.2" fill="#222" stroke="none" stroke-width="1" rx="0"/><rect x="-0.2" y="1.6" width="1.2" height="1.2" fill="#222" stroke="none" stroke-width="1" rx="0"/><rect x="2" y="1.6" width="1.2" height="1.2" fill="#222" stroke="none" stroke-width="1" rx="0"/><rect x="4" y="1.6" width="1.2" height="1.2" fill="#222" stroke="none" stroke-width="1" rx="0"/><line x1="-4.6" y1="4" x2="4.6" y2="4" stroke="#222" stroke-width="0.9" stroke-linecap="butt"/></g>
<g transform="translate(491.6,174.4) scale(0.88)"><rect x="-4.4" y="-4.2" width="1.6" height="1.4" fill="#222" stroke="none" stroke-width="1" rx="0"/><rect x="-1.8" y="-4.2" width="1.6" height="1.4" fill="#222" stroke="none" stroke-width="1" rx="0"/><rect x="0.8" y="-4.2" width="1.6" height="1.4" fill="#222" stroke="none" stroke-width="1" rx="0"/><rect x="3.2" y="-4.2" width="1.6" height="1.4" fill="#222" stroke="none" stroke-width="1" rx="0"/><rect x="-4.4" y="-1.6" width="2.2" height="1.4" fill="#222" stroke="none" stroke-width="1" rx="0"/><rect x="-1" y="-1.6" width="2.2" height="1.4" fill="#222" stroke="none" stroke-width="1" rx="0"/><rect x="2.4" y="-1.6" width="2.2" height="1.4" fill="#222" stroke="none" stroke-width="1" rx="0"/><rect x="-4.4" y="1" width="1.6" height="1.4" fill="#222" stroke="none" stroke-width="1" rx="0"/><rect x="-1.8" y="1" width="1.6" height="1.4" fill="#222" stroke="none" stroke-width="1" rx="0"/><rect x="0.8" y="1" width="1.6" height="1.4" fill="#222" stroke="none" stroke-width="1" rx="0"/><rect x="3.2" y="1" width="1.6" height="1.4" fill="#222" stroke="none" stroke-width="1" rx="0"/><line x1="-4.6" y1="3.8" x2="4.6" y2="3.8" stroke="#222" stroke-width="1" stroke-linecap="butt"/></g>
<path d="M573.4000000000001,184.0 L575.2,186.0 L577.0,184.0" fill="none" stroke="#444" stroke-width="0.9"/>
<g transform="translate(491.6,184.79999999999998) scale(0.88)"><line x1="-4.6" y1="-3.8" x2="4.6" y2="-3.8" stroke="#222" stroke-width="0.7" stroke-linecap="butt"/><line x1="-4.6" y1="-1.6" x2="4.6" y2="-1.6" stroke="#222" stroke-width="1.2" stroke-linecap="butt"/><line x1="-4.6" y1="1" x2="4.6" y2="1" stroke="#222" stroke-width="1.7" stroke-linecap="butt"/><line x1="-4.6" y1="3.8" x2="4.6" y2="3.8" stroke="#222" stroke-width="2.1" stroke-linecap="butt"/></g>
<g transform="translate(491.6,195.2) scale(0.88)"><circle cx="0" cy="-0.4" r="3.9" fill="#2a5ab8" stroke="#1a3a88" stroke-width="0.6"/><path d="M-2.6,-2 C-1,-3.6 1,-3 0.6,-1.4 C0.2,0 -1.6,0.2 -2.6,-2 Z" fill="#4ab04a" stroke="none" stroke-width="1" stroke-linejoin="round" stroke-linecap="round" /><path d="M0.8,0.6 C2.2,0 3.2,1 2.2,2.4 C1.4,3 0.6,2 0.8,0.6 Z" fill="#4ab04a" stroke="none" stroke-width="1" stroke-linejoin="round" stroke-linecap="round" /><rect x="-2.4" y="3.4" width="4.8" height="1.2" fill="#666" stroke="none" stroke-width="1" rx="0"/></g>
<g transform="translate(491.6,205.6) scale(0.88)"><rect x="-4.5" y="-4.5" width="9" height="9" fill="#fafafa" stroke="none" stroke-width="1" rx="0"/><rect x="-4.5" y="-2.25" width="2.25" height="2.25" fill="#8e8e8e" stroke="none" stroke-width="1" rx="0"/><rect x="-2.25" y="-4.5" width="2.25" height="2.25" fill="#8e8e8e" stroke="none" stroke-width="1" rx="0"/><rect x="0" y="-2.25" width="2.25" height="2.25" fill="#8e8e8e" stroke="none" stroke-width="1" rx="0"/><rect x="2.25" y="-4.5" width="2.25" height="2.25" fill="#8e8e8e" stroke="none" stroke-width="1" rx="0"/><rect x="-2.25" y="0" width="2.25" height="2.25" fill="#8e8e8e" stroke="none" stroke-width="1" rx="0"/><rect x="2.25" y="0" width="2.25" height="2.25" fill="#8e8e8e" stroke="none" stroke-width="1" rx="0"/><rect x="-4.5" y="2.25" width="2.25" height="2.25" fill="#8e8e8e" stroke="none" stroke-width="1" rx="0"/><rect x="0" y="2.25" width="2.25" height="2.25" fill="#8e8e8e" stroke="none" stroke-width="1" rx="0"/></g>
<path d="M571.8,217.29999999999998 H577.2 L574.5,214.1 Z" fill="#111"/>
<path d="M573.4000000000001,227.70000000000002 L575.2,229.70000000000002 L577.0,227.70000000000002" fill="none" stroke="#c0c0c0" stroke-width="0.9"/>
<g transform="translate(491.6,228.5) scale(0.88)"><line x1="-3.6" y1="-4.2" x2="-3.6" y2="4.2" stroke="#d03030" stroke-width="1.3" stroke-linecap="butt"/><line x1="-1.8" y1="-4.2" x2="-1.8" y2="4.2" stroke="#e07030" stroke-width="1.3" stroke-linecap="butt"/><line x1="0" y1="-4.2" x2="0" y2="4.2" stroke="#30a030" stroke-width="1.3" stroke-linecap="butt"/><line x1="1.8" y1="-4.2" x2="1.8" y2="4.2" stroke="#3060d0" stroke-width="1.3" stroke-linecap="butt"/><line x1="3.6" y1="-4.2" x2="3.6" y2="4.2" stroke="#3060d0" stroke-width="1.3" stroke-linecap="butt"/></g>
<path d="M573.4000000000001,238.10000000000002 L575.2,240.10000000000002 L577.0,238.10000000000002" fill="none" stroke="#444" stroke-width="0.9"/>
<g transform="translate(491.6,238.9) scale(0.88)"><rect x="-4.4" y="-2.6" width="6.6" height="6.8" fill="#f6f6f6" stroke="#555" stroke-width="0.7" rx="0"/><line x1="-1.4" y1="2.4" x2="4.2" y2="-4.2" stroke="#e8a820" stroke-width="1.5" stroke-linecap="butt"/><line x1="-3.4" y1="0" x2="0" y2="0" stroke="#555" stroke-width="0.6" stroke-linecap="butt"/><line x1="-3.4" y1="1.8" x2="-1" y2="1.8" stroke="#555" stroke-width="0.6" stroke-linecap="butt"/></g>
<g transform="translate(491.6,249.4) scale(0.88)"><rect x="-4.4" y="-4" width="8.6" height="8.2" fill="#e8e8e8" stroke="#666" stroke-width="0.5" rx="0"/><path d="M-3.6,3.6 L4,3.6 L4,-3 Z" fill="#3a3a3a" stroke="none" stroke-width="1" stroke-linejoin="round" stroke-linecap="round" /><line x1="-3.2" y1="-3.6" x2="-3.2" y2="3.4" stroke="#d03030" stroke-width="1.1" stroke-linecap="butt"/><line x1="-1.6" y1="-3.6" x2="-1.6" y2="2" stroke="#30a030" stroke-width="1" stroke-linecap="butt"/></g>
<path d="M571.8,261.1 H577.2 L574.5,257.9 Z" fill="#111"/>
<g transform="translate(491.6,272.20000000000005) scale(0.88)"><circle cx="0" cy="0" r="3.7" fill="#f6f6f6" stroke="#444" stroke-width="0.9"/><circle cx="0" cy="0" r="0.9" fill="#c8a020" stroke="none" stroke-width="1"/><text x="3.4" y="4.8" text-anchor="middle" font-family="Liberation Sans, sans-serif" font-size="4.2" font-weight="bold" fill="#111">x</text></g>
<g transform="translate(491.6,282.6) scale(0.88)"><circle cx="0" cy="0" r="3.7" fill="#f6f6f6" stroke="#444" stroke-width="0.9"/><circle cx="0" cy="0" r="0.9" fill="#c8a020" stroke="none" stroke-width="1"/><text x="3.4" y="4.6" text-anchor="middle" font-family="Liberation Sans, sans-serif" font-size="4.2" font-weight="bold" fill="#111">y</text></g>
<g transform="translate(491.6,293.0) scale(0.88)"><circle cx="0" cy="0" r="3.7" fill="#f6f6f6" stroke="#444" stroke-width="0.9"/><circle cx="0" cy="0" r="0.9" fill="#c8a020" stroke="none" stroke-width="1"/><text x="3.4" y="4.8" text-anchor="middle" font-family="Liberation Sans, sans-serif" font-size="4.2" font-weight="bold" fill="#111">z</text></g>
<g transform="translate(491.6,303.40000000000003) scale(0.88)"><line x1="0" y1="-2.6" x2="0" y2="2.6" stroke="#3a7ad8" stroke-width="1.1" stroke-linecap="butt"/><line x1="-2.8" y1="-4" x2="2.8" y2="-4" stroke="#3a7ad8" stroke-width="1.1" stroke-linecap="butt"/><line x1="-2.8" y1="4" x2="2.8" y2="4" stroke="#3a7ad8" stroke-width="1.1" stroke-linecap="butt"/><path d="M0,-3.6 L1.4,-1.6 H-1.4 Z M0,3.6 L1.4,1.6 H-1.4 Z" fill="#3a7ad8" stroke="none" stroke-width="1" stroke-linejoin="round" stroke-linecap="round" /></g>
<g transform="translate(491.6,313.8) scale(0.88)"><line x1="-2.6" y1="0" x2="2.6" y2="0" stroke="#3a7ad8" stroke-width="1.1" stroke-linecap="butt"/><line x1="-4" y1="-2.8" x2="-4" y2="2.8" stroke="#3a7ad8" stroke-width="1.1" stroke-linecap="butt"/><line x1="4" y1="-2.8" x2="4" y2="2.8" stroke="#3a7ad8" stroke-width="1.1" stroke-linecap="butt"/><path d="M-3.6,0 L-1.6,1.4 V-1.4 Z M3.6,0 L1.6,1.4 V-1.4 Z" fill="#3a7ad8" stroke="none" stroke-width="1" stroke-linejoin="round" stroke-linecap="round" /></g>
<path d="M571.8,325.7 H577.2 L574.5,322.5 Z" fill="#111"/>
<path d="M573.4000000000001,335.6 L575.2,337.6 L577.0,335.6" fill="none" stroke="#444" stroke-width="0.9"/>
<g transform="translate(491.6,336.40000000000003) scale(0.88)"><path d="M-1,0.6 V-3.8 M-1,0.6 L3.6,0.2 M-1,0.6 L-3.6,3.4" fill="none" stroke="#111" stroke-width="1.2" stroke-linejoin="round" stroke-linecap="round" /><path d="M-1,-4.8 L0,-3.2 H-2 Z M4.6,0.2 L3,1.2 V-0.8 Z" fill="#111" stroke="none" stroke-width="1" stroke-linejoin="round" stroke-linecap="round" /><circle cx="-3.6" cy="3.4" r="0.9" fill="#111" stroke="none" stroke-width="1"/></g>
<clipPath id="cp1"><rect x="480" y="340" width="100" height="6"/></clipPath><g clip-path="url(#cp1)"><g transform="translate(491.6,346.8) scale(0.88)"><path d="M-1.6,-4 V2 H3.4" fill="none" stroke="#111" stroke-width="1.4"/><path d="M-1.6,-5.4 L-0.2,-3 H-3 Z" fill="#111"/></g></g>
</svg>
</div>
</body></html>
